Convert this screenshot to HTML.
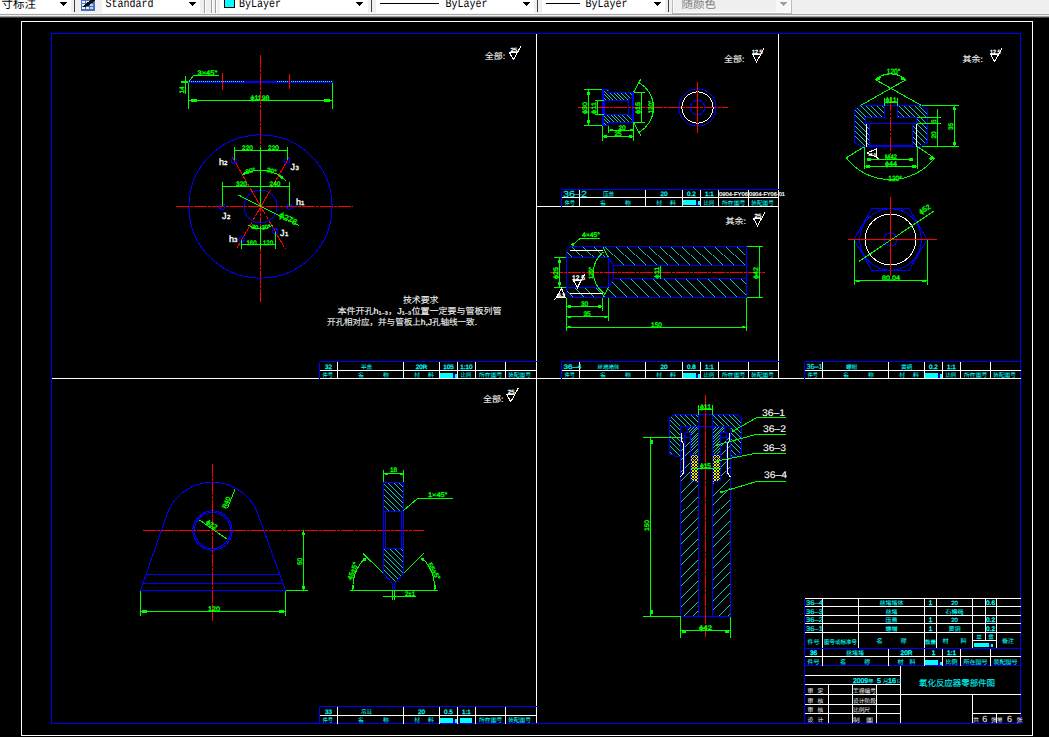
<!DOCTYPE html>
<html><head><meta charset="utf-8"><title>CAD</title>
<style>html,body{margin:0;padding:0;background:#000;overflow:hidden}svg{display:block}</style>
</head><body>
<svg width="1049" height="737" viewBox="0 0 1049 737" shape-rendering="crispEdges" text-rendering="geometricPrecision">
<rect x="0" y="0" width="1049" height="737" fill="#000" stroke="none" stroke-width="1"/>
<rect x="21.5" y="21.5" width="1011" height="713.5" fill="none" stroke="#ffffff" stroke-width="1"/>
<rect x="51.5" y="33.5" width="969" height="689.5" fill="none" stroke="#0000ff" stroke-width="1"/>
<line x1="51.5" y1="378.5" x2="1020.5" y2="378.5" stroke="#ffffff" stroke-width="1"/>
<line x1="536.5" y1="33.5" x2="536.5" y2="723" stroke="#ffffff" stroke-width="1"/>
<line x1="778.5" y1="33.5" x2="778.5" y2="378.5" stroke="#ffffff" stroke-width="1"/>
<line x1="536.5" y1="206.5" x2="778.5" y2="206.5" stroke="#ffffff" stroke-width="1"/>
<rect x="0" y="0" width="1049" height="14" fill="#f0f0f0" stroke="none" stroke-width="1"/>
<rect x="0" y="13" width="1049" height="1" fill="#f6f6f6" stroke="none" stroke-width="1"/>
<rect x="0" y="14" width="1049" height="1" fill="#a8a8a8" stroke="none" stroke-width="1"/>
<rect x="0" y="15" width="1049" height="1" fill="#f0f0f0" stroke="none" stroke-width="1"/>
<rect x="0" y="16" width="1049" height="1" fill="#a0a0a0" stroke="none" stroke-width="1"/>
<rect x="0" y="17" width="1049" height="1" fill="#404040" stroke="none" stroke-width="1"/>
<rect x="0" y="0" width="71" height="13" fill="#fff" stroke="none" stroke-width="1"/>
<rect x="60" y="2" width="7" height="1" fill="#000" stroke="none" stroke-width="1"/>
<rect x="61" y="3" width="5" height="1" fill="#000" stroke="none" stroke-width="1"/>
<rect x="62" y="4" width="3" height="1" fill="#000" stroke="none" stroke-width="1"/>
<rect x="63" y="5" width="1" height="1" fill="#000" stroke="none" stroke-width="1"/>
<text x="1.5" y="7.5" fill="#000" font-size="11.5" text-anchor="start" font-family='"Liberation Sans","Noto Sans CJK SC",sans-serif' font-weight="400">寸标注</text>
<line x1="74.5" y1="0" x2="74.5" y2="12" stroke="#404040" stroke-width="1"/>
<rect x="81" y="0" width="14" height="11" fill="#4f78c4" stroke="none" stroke-width="1"/>
<rect x="81" y="6" width="14" height="5" fill="#4a6fb0" stroke="none" stroke-width="1"/>
<rect x="82" y="1" width="3" height="2" fill="#e8f0ff" stroke="none" stroke-width="1"/>
<rect x="82" y="4" width="3" height="2" fill="#e8f0ff" stroke="none" stroke-width="1"/>
<rect x="82" y="7" width="3" height="2" fill="#e8f0ff" stroke="none" stroke-width="1"/>
<rect x="86" y="1" width="3" height="2" fill="#e8f0ff" stroke="none" stroke-width="1"/>
<rect x="86" y="4" width="3" height="2" fill="#e8f0ff" stroke="none" stroke-width="1"/>
<rect x="86" y="7" width="3" height="2" fill="#e8f0ff" stroke="none" stroke-width="1"/>
<rect x="90" y="1" width="3" height="2" fill="#b8d0ff" stroke="none" stroke-width="1"/>
<rect x="90" y="4" width="3" height="2" fill="#b8d0ff" stroke="none" stroke-width="1"/>
<rect x="90" y="7" width="3" height="2" fill="#b8d0ff" stroke="none" stroke-width="1"/>
<polygon points="83.5,6.5 86,4 93.5,-1 95,0 88,5.5" fill="#111" stroke="#111" stroke-width="1"/>
<rect x="101.5" y="0" width="98.5" height="13" fill="#fff" stroke="none" stroke-width="1"/>
<rect x="189" y="2" width="7" height="1" fill="#000" stroke="none" stroke-width="1"/>
<rect x="190" y="3" width="5" height="1" fill="#000" stroke="none" stroke-width="1"/>
<rect x="191" y="4" width="3" height="1" fill="#000" stroke="none" stroke-width="1"/>
<rect x="192" y="5" width="1" height="1" fill="#000" stroke="none" stroke-width="1"/>
<text x="105.5" y="5.6" fill="#000" font-size="10" font-family='"Liberation Mono","Noto Serif CJK SC",monospace' textLength="48" lengthAdjust="spacingAndGlyphs" transform="scale(1,1.2)">Standard</text>
<line x1="204.5" y1="0" x2="204.5" y2="13" stroke="#a0a0a0" stroke-width="1"/>
<line x1="205.5" y1="0" x2="205.5" y2="13" stroke="#fff" stroke-width="1"/>
<line x1="211.5" y1="0" x2="211.5" y2="13" stroke="#a0a0a0" stroke-width="1"/>
<line x1="212.5" y1="0" x2="212.5" y2="13" stroke="#fff" stroke-width="1"/>
<line x1="215.5" y1="0" x2="215.5" y2="13" stroke="#a0a0a0" stroke-width="1"/>
<line x1="216.5" y1="0" x2="216.5" y2="13" stroke="#fff" stroke-width="1"/>
<rect x="220" y="0" width="147.5" height="13" fill="#fff" stroke="none" stroke-width="1"/>
<rect x="356" y="2" width="7" height="1" fill="#000" stroke="none" stroke-width="1"/>
<rect x="357" y="3" width="5" height="1" fill="#000" stroke="none" stroke-width="1"/>
<rect x="358" y="4" width="3" height="1" fill="#000" stroke="none" stroke-width="1"/>
<rect x="359" y="5" width="1" height="1" fill="#000" stroke="none" stroke-width="1"/>
<text x="239" y="5.6" fill="#000" font-size="10" font-family='"Liberation Mono","Noto Serif CJK SC",monospace' textLength="42" lengthAdjust="spacingAndGlyphs" transform="scale(1,1.2)">ByLayer</text>
<rect x="224.5" y="-1" width="10" height="8" fill="#00ffff" stroke="#000" stroke-width="1"/>
<line x1="371.5" y1="0" x2="371.5" y2="12" stroke="#404040" stroke-width="1"/>
<rect x="376" y="0" width="158" height="13" fill="#fff" stroke="none" stroke-width="1"/>
<rect x="523" y="2" width="7" height="1" fill="#000" stroke="none" stroke-width="1"/>
<rect x="524" y="3" width="5" height="1" fill="#000" stroke="none" stroke-width="1"/>
<rect x="525" y="4" width="3" height="1" fill="#000" stroke="none" stroke-width="1"/>
<rect x="526" y="5" width="1" height="1" fill="#000" stroke="none" stroke-width="1"/>
<line x1="380" y1="3.5" x2="439" y2="3.5" stroke="#000" stroke-width="1"/>
<text x="445.5" y="5.6" fill="#000" font-size="10" font-family='"Liberation Mono","Noto Serif CJK SC",monospace' textLength="42" lengthAdjust="spacingAndGlyphs" transform="scale(1,1.2)">ByLayer</text>
<line x1="537.5" y1="0" x2="537.5" y2="12" stroke="#404040" stroke-width="1"/>
<rect x="542" y="0" width="123" height="13" fill="#fff" stroke="none" stroke-width="1"/>
<rect x="654" y="2" width="7" height="1" fill="#000" stroke="none" stroke-width="1"/>
<rect x="655" y="3" width="5" height="1" fill="#000" stroke="none" stroke-width="1"/>
<rect x="656" y="4" width="3" height="1" fill="#000" stroke="none" stroke-width="1"/>
<rect x="657" y="5" width="1" height="1" fill="#000" stroke="none" stroke-width="1"/>
<line x1="546" y1="3.5" x2="580" y2="3.5" stroke="#000" stroke-width="1"/>
<text x="585.5" y="5.6" fill="#000" font-size="10" font-family='"Liberation Mono","Noto Serif CJK SC",monospace' textLength="42" lengthAdjust="spacingAndGlyphs" transform="scale(1,1.2)">ByLayer</text>
<line x1="668.5" y1="0" x2="668.5" y2="12" stroke="#404040" stroke-width="1"/>
<rect x="672" y="0" width="120" height="14" fill="#b8b8b8" stroke="none" stroke-width="1"/>
<rect x="673" y="0" width="118" height="13" fill="#fff" stroke="none" stroke-width="1"/>
<rect x="674" y="0" width="116" height="12" fill="#f0f0f0" stroke="none" stroke-width="1"/>
<rect x="776" y="0" width="14" height="12" fill="#f8f8f8" stroke="none" stroke-width="1"/>
<rect x="780" y="2" width="7" height="1" fill="#a0a0a0" stroke="none" stroke-width="1"/>
<rect x="781" y="3" width="5" height="1" fill="#a0a0a0" stroke="none" stroke-width="1"/>
<rect x="782" y="4" width="3" height="1" fill="#a0a0a0" stroke="none" stroke-width="1"/>
<rect x="783" y="5" width="1" height="1" fill="#a0a0a0" stroke="none" stroke-width="1"/>
<text x="681.5" y="7.5" fill="#808080" font-size="11.5" text-anchor="start" font-family='"Liberation Sans","Noto Sans CJK SC",sans-serif' font-weight="400">随颜色</text>
<line x1="319.5" y1="361.5" x2="536.5" y2="361.5" stroke="#0000ff" stroke-width="1"/>
<line x1="319.5" y1="361.5" x2="319.5" y2="378.5" stroke="#0000ff" stroke-width="1"/>
<line x1="319.5" y1="370.5" x2="536.5" y2="370.5" stroke="#ffffff" stroke-width="1"/>
<line x1="337.5" y1="361.5" x2="337.5" y2="378.5" stroke="#ffffff" stroke-width="1"/>
<line x1="403.5" y1="361.5" x2="403.5" y2="378.5" stroke="#ffffff" stroke-width="1"/>
<line x1="439.5" y1="361.5" x2="439.5" y2="378.5" stroke="#ffffff" stroke-width="1"/>
<line x1="457.5" y1="361.5" x2="457.5" y2="378.5" stroke="#ffffff" stroke-width="1"/>
<line x1="475.5" y1="361.5" x2="475.5" y2="378.5" stroke="#ffffff" stroke-width="1"/>
<line x1="505.5" y1="361.5" x2="505.5" y2="378.5" stroke="#ffffff" stroke-width="1"/>
<text x="328.5" y="368.5" fill="#00ffff" font-size="6.3" text-anchor="middle" font-family='"Liberation Sans","Noto Sans CJK SC",sans-serif' stroke="#00ffff" stroke-width="0.3">32</text>
<text x="366.5" y="368.5" fill="#00ffff" font-size="5.6" text-anchor="middle" font-family='"Liberation Sans","Noto Sans CJK SC",sans-serif' font-weight="300" stroke="#00ffff" stroke-width="0.12">平盖</text>
<text x="421.5" y="368.5" fill="#00ffff" font-size="6.3" text-anchor="middle" font-family='"Liberation Sans","Noto Sans CJK SC",sans-serif' stroke="#00ffff" stroke-width="0.3">20R</text>
<text x="448.5" y="368.5" fill="#00ffff" font-size="6.3" text-anchor="middle" font-family='"Liberation Sans","Noto Sans CJK SC",sans-serif' stroke="#00ffff" stroke-width="0.3">105</text>
<text x="466.5" y="368.5" fill="#00ffff" font-size="6.3" text-anchor="middle" font-family='"Liberation Sans","Noto Sans CJK SC",sans-serif' stroke="#00ffff" stroke-width="0.3">1:10</text>
<text x="322.5" y="377" fill="#00ffff" font-size="5.8" text-anchor="start" font-family='"Liberation Sans","Noto Sans CJK SC",sans-serif' font-weight="300" textLength="10.5" lengthAdjust="spacingAndGlyphs" stroke="#00ffff" stroke-width="0.12">件号</text>
<text x="358" y="377" fill="#00ffff" font-size="5.8" text-anchor="start" font-family='"Liberation Sans","Noto Sans CJK SC",sans-serif' font-weight="300" textLength="6" lengthAdjust="spacingAndGlyphs" stroke="#00ffff" stroke-width="0.12">名</text>
<text x="383" y="377" fill="#00ffff" font-size="5.8" text-anchor="start" font-family='"Liberation Sans","Noto Sans CJK SC",sans-serif' font-weight="300" textLength="6" lengthAdjust="spacingAndGlyphs" stroke="#00ffff" stroke-width="0.12">称</text>
<text x="414" y="377" fill="#00ffff" font-size="5.8" text-anchor="start" font-family='"Liberation Sans","Noto Sans CJK SC",sans-serif' font-weight="300" textLength="6" lengthAdjust="spacingAndGlyphs" stroke="#00ffff" stroke-width="0.12">材</text>
<text x="428" y="377" fill="#00ffff" font-size="5.8" text-anchor="start" font-family='"Liberation Sans","Noto Sans CJK SC",sans-serif' font-weight="300" textLength="6" lengthAdjust="spacingAndGlyphs" stroke="#00ffff" stroke-width="0.12">料</text>
<rect x="440" y="373" width="13" height="4.5" fill="#00ffff" stroke="none" stroke-width="1"/>
<rect x="453" y="375" width="3" height="2.5" fill="#0000ff" stroke="none" stroke-width="1"/>
<rect x="455" y="374" width="2" height="3.5" fill="#00ffff" stroke="none" stroke-width="1"/>
<text x="460.5" y="377" fill="#00ffff" font-size="5.8" text-anchor="start" font-family='"Liberation Sans","Noto Sans CJK SC",sans-serif' font-weight="300" textLength="10.5" lengthAdjust="spacingAndGlyphs" stroke="#00ffff" stroke-width="0.12">比例</text>
<text x="479" y="377" fill="#00ffff" font-size="5.8" text-anchor="start" font-family='"Liberation Sans","Noto Sans CJK SC",sans-serif' font-weight="300" textLength="23.5" lengthAdjust="spacingAndGlyphs" stroke="#00ffff" stroke-width="0.12">所在图号</text>
<text x="508" y="377" fill="#00ffff" font-size="5.8" text-anchor="start" font-family='"Liberation Sans","Noto Sans CJK SC",sans-serif' font-weight="300" textLength="23" lengthAdjust="spacingAndGlyphs" stroke="#00ffff" stroke-width="0.12">装配图号</text>
<rect x="188" y="81" width="145" height="2" fill="#0000ff" stroke="none" stroke-width="1"/>
<line x1="189" y1="81.5" x2="245" y2="81.5" stroke="#00ffff" stroke-width="1" stroke-dasharray="1 1"/>
<line x1="277" y1="81.5" x2="332" y2="81.5" stroke="#00ffff" stroke-width="1" stroke-dasharray="1 1"/>
<line x1="185.5" y1="76" x2="185.5" y2="94" stroke="#00ff00" stroke-width="1"/>
<line x1="181" y1="82" x2="188" y2="82" stroke="#00ff00" stroke-width="2"/>
<line x1="188.5" y1="83" x2="188.5" y2="109" stroke="#00ff00" stroke-width="1"/>
<line x1="332.5" y1="83" x2="332.5" y2="109" stroke="#00ff00" stroke-width="1"/>
<line x1="188.5" y1="100.5" x2="332.5" y2="100.5" stroke="#00ff00" stroke-width="1"/>
<rect x="191" y="99" width="6" height="3" fill="#00ff00" stroke="none" stroke-width="1"/>
<rect x="324" y="99" width="6" height="3" fill="#00ff00" stroke="none" stroke-width="1"/>
<polyline points="189.5,81 193.5,75.5 219,75.5" fill="none" stroke="#00ff00" stroke-width="1"/>
<text x="197.5" y="75" fill="#00ff00" font-size="6.5" text-anchor="start" font-family='"Liberation Sans","Noto Sans CJK SC",sans-serif' textLength="20" lengthAdjust="spacingAndGlyphs" stroke="#00ff00" stroke-width="0.35">3×45°</text>
<text x="184" y="93.5" fill="#00ff00" font-size="6.5" text-anchor="start" font-family='"Liberation Sans","Noto Sans CJK SC",sans-serif' transform="rotate(-90 184 93.5)" stroke="#00ff00" stroke-width="0.35">14</text>
<text x="250.5" y="99.5" fill="#00ff00" font-size="6.5" text-anchor="start" font-family='"Liberation Sans","Noto Sans CJK SC",sans-serif' textLength="19" lengthAdjust="spacingAndGlyphs" stroke="#00ff00" stroke-width="0.35">ϕ1198</text>
<line x1="222.5" y1="73" x2="222.5" y2="90" stroke="#ff0000" stroke-width="1"/>
<line x1="289.5" y1="74" x2="289.5" y2="89" stroke="#ff0000" stroke-width="1"/>
<line x1="260.5" y1="55" x2="260.5" y2="303" stroke="#ff0000" stroke-width="1" stroke-dasharray="13 1 3 1"/>
<circle cx="260.5" cy="206.5" r="71.6" fill="none" stroke="#0000ff" stroke-width="1"/>
<circle cx="260.5" cy="206.5" r="16.5" fill="none" stroke="#0000ff" stroke-width="1"/>
<line x1="175.5" y1="206.5" x2="353" y2="206.5" stroke="#ff0000" stroke-width="1" stroke-dasharray="13 1 3 1"/>
<line x1="231.9" y1="156.5" x2="285.5" y2="249.4" stroke="#ff0000" stroke-width="1" stroke-dasharray="30 2 3 2"/>
<line x1="289" y1="157.6" x2="235.6" y2="250.5" stroke="#ff0000" stroke-width="1" stroke-dasharray="30 2 3 2"/>
<circle cx="234" cy="160.8" r="2.7" fill="none" stroke="#0000ff" stroke-width="1"/>
<circle cx="287.2" cy="160.8" r="2.7" fill="none" stroke="#0000ff" stroke-width="1"/>
<circle cx="222.1" cy="206.8" r="2.7" fill="none" stroke="#0000ff" stroke-width="1"/>
<circle cx="289.6" cy="206.8" r="2.7" fill="none" stroke="#0000ff" stroke-width="1"/>
<circle cx="241.6" cy="239.6" r="2.7" fill="none" stroke="#0000ff" stroke-width="1"/>
<circle cx="275.1" cy="231.4" r="2.7" fill="none" stroke="#0000ff" stroke-width="1"/>
<line x1="260.5" y1="146.5" x2="260.5" y2="206" stroke="#00ff00" stroke-width="1"/>
<line x1="260.5" y1="226" x2="260.5" y2="249" stroke="#00ff00" stroke-width="1"/>
<line x1="234.5" y1="150.5" x2="287.5" y2="150.5" stroke="#00ff00" stroke-width="1"/>
<line x1="234.5" y1="146.5" x2="234.5" y2="160" stroke="#00ff00" stroke-width="1"/>
<line x1="287.5" y1="146.5" x2="287.5" y2="160" stroke="#00ff00" stroke-width="1"/>
<text x="247.5" y="150" fill="#00ff00" font-size="6.5" text-anchor="middle" font-family='"Liberation Sans","Noto Sans CJK SC",sans-serif' stroke="#00ff00" stroke-width="0.35">220</text>
<text x="273.5" y="150" fill="#00ff00" font-size="6.5" text-anchor="middle" font-family='"Liberation Sans","Noto Sans CJK SC",sans-serif' stroke="#00ff00" stroke-width="0.35">220</text>
<line x1="222.5" y1="186.5" x2="289.5" y2="186.5" stroke="#00ff00" stroke-width="1"/>
<line x1="222.5" y1="182" x2="222.5" y2="206" stroke="#00ff00" stroke-width="1"/>
<line x1="289.5" y1="182" x2="289.5" y2="206" stroke="#00ff00" stroke-width="1"/>
<text x="241.5" y="186" fill="#00ff00" font-size="6.5" text-anchor="middle" font-family='"Liberation Sans","Noto Sans CJK SC",sans-serif' stroke="#00ff00" stroke-width="0.35">320</text>
<text x="275" y="186" fill="#00ff00" font-size="6.5" text-anchor="middle" font-family='"Liberation Sans","Noto Sans CJK SC",sans-serif' stroke="#00ff00" stroke-width="0.35">240</text>
<line x1="241.5" y1="244.5" x2="275.5" y2="244.5" stroke="#00ff00" stroke-width="1"/>
<line x1="241.5" y1="240" x2="241.5" y2="249" stroke="#00ff00" stroke-width="1"/>
<line x1="275.5" y1="232" x2="275.5" y2="249" stroke="#00ff00" stroke-width="1"/>
<text x="251.5" y="244.5" fill="#00ff00" font-size="6.5" text-anchor="middle" font-family='"Liberation Sans","Noto Sans CJK SC",sans-serif' textLength="10" lengthAdjust="spacingAndGlyphs" stroke="#00ff00" stroke-width="0.35">160</text>
<text x="268" y="244.5" fill="#00ff00" font-size="6.5" text-anchor="middle" font-family='"Liberation Sans","Noto Sans CJK SC",sans-serif' textLength="10" lengthAdjust="spacingAndGlyphs" stroke="#00ff00" stroke-width="0.35">120</text>
<path d="M242.35 175.06 A36.3 36.3 0 0 1 285.72 180.39" fill="none" stroke="#00ff00" stroke-width="1"/>
<polygon points="242.4,175.2 246.5,171.3 247.5,172.8" fill="#00ff00" stroke="#00ff00" stroke-width="1"/>
<polygon points="278.7,175.1 283,177 282,178.5" fill="#00ff00" stroke="#00ff00" stroke-width="1"/>
<text x="251" y="173" fill="#00ff00" font-size="6.5" text-anchor="middle" font-family='"Liberation Sans","Noto Sans CJK SC",sans-serif' transform="rotate(-15 251 173)" stroke="#00ff00" stroke-width="0.35">30°</text>
<text x="271" y="173" fill="#00ff00" font-size="6.5" text-anchor="middle" font-family='"Liberation Sans","Noto Sans CJK SC",sans-serif' transform="rotate(15 271 173)" stroke="#00ff00" stroke-width="0.35">30°</text>
<path d="M247.65 224.85 A22.4 22.4 0 0 0 273.35 224.85" fill="none" stroke="#00ff00" stroke-width="1"/>
<text x="254.5" y="229" fill="#00ff00" font-size="6" text-anchor="middle" font-family='"Liberation Sans","Noto Sans CJK SC",sans-serif' transform="rotate(10 254.5 229)" stroke="#00ff00" stroke-width="0.35">30</text>
<text x="266.5" y="229" fill="#00ff00" font-size="6" text-anchor="middle" font-family='"Liberation Sans","Noto Sans CJK SC",sans-serif' transform="rotate(-10 266.5 229)" stroke="#00ff00" stroke-width="0.35">30°</text>
<line x1="238.4" y1="195" x2="299.2" y2="225.5" stroke="#00ff00" stroke-width="1"/>
<text x="278.5" y="216.8" fill="#00ff00" font-size="8" text-anchor="start" font-family='"Liberation Sans","Noto Sans CJK SC",sans-serif' transform="rotate(27 278.5 216.8)" textLength="19" lengthAdjust="spacingAndGlyphs" stroke="#00ff00" stroke-width="0.35">ϕ276</text>
<text x="219" y="165" fill="#ffffff" font-size="9" text-anchor="start" font-family='"Liberation Sans","Noto Sans CJK SC",sans-serif' stroke="#ffffff" stroke-width="0.35">h</text>
<text x="224" y="165" fill="#ffffff" font-size="6" text-anchor="start" font-family='"Liberation Sans","Noto Sans CJK SC",sans-serif' stroke="#ffffff" stroke-width="0.35">2</text>
<text x="290.5" y="169.5" fill="#ffffff" font-size="9" text-anchor="start" font-family='"Liberation Sans","Noto Sans CJK SC",sans-serif' stroke="#ffffff" stroke-width="0.35">J</text>
<text x="295.5" y="169.5" fill="#ffffff" font-size="6" text-anchor="start" font-family='"Liberation Sans","Noto Sans CJK SC",sans-serif' stroke="#ffffff" stroke-width="0.35">3</text>
<text x="296" y="205" fill="#ffffff" font-size="9" text-anchor="start" font-family='"Liberation Sans","Noto Sans CJK SC",sans-serif' stroke="#ffffff" stroke-width="0.35">h</text>
<text x="301" y="205" fill="#ffffff" font-size="6" text-anchor="start" font-family='"Liberation Sans","Noto Sans CJK SC",sans-serif' stroke="#ffffff" stroke-width="0.35">1</text>
<text x="222" y="218.5" fill="#ffffff" font-size="9" text-anchor="start" font-family='"Liberation Sans","Noto Sans CJK SC",sans-serif' stroke="#ffffff" stroke-width="0.35">J</text>
<text x="227" y="218.5" fill="#ffffff" font-size="6" text-anchor="start" font-family='"Liberation Sans","Noto Sans CJK SC",sans-serif' stroke="#ffffff" stroke-width="0.35">2</text>
<text x="280" y="236" fill="#ffffff" font-size="9" text-anchor="start" font-family='"Liberation Sans","Noto Sans CJK SC",sans-serif' stroke="#ffffff" stroke-width="0.35">J</text>
<text x="285" y="236" fill="#ffffff" font-size="6" text-anchor="start" font-family='"Liberation Sans","Noto Sans CJK SC",sans-serif' stroke="#ffffff" stroke-width="0.35">1</text>
<text x="229" y="242" fill="#ffffff" font-size="9" text-anchor="start" font-family='"Liberation Sans","Noto Sans CJK SC",sans-serif' stroke="#ffffff" stroke-width="0.35">h</text>
<text x="234" y="242" fill="#ffffff" font-size="6" text-anchor="start" font-family='"Liberation Sans","Noto Sans CJK SC",sans-serif' stroke="#ffffff" stroke-width="0.35">3</text>
<text x="403" y="303" fill="#ffffff" font-size="8.8" text-anchor="start" font-family='"Liberation Sans","Noto Sans CJK SC",sans-serif' font-weight="300" textLength="35.5" lengthAdjust="spacingAndGlyphs" stroke="#ffffff" stroke-width="0.2">技术要求</text>
<text x="337.5" y="314" fill="#ffffff" font-size="8.6" text-anchor="start" font-family='"Liberation Sans","Noto Sans CJK SC",sans-serif' font-weight="300" textLength="164" lengthAdjust="spacingAndGlyphs" stroke="#ffffff" stroke-width="0.2">本件开孔h₁₋₃，J₁₋₃位置一定要与管板列管</text>
<text x="327" y="325" fill="#ffffff" font-size="8.6" text-anchor="start" font-family='"Liberation Sans","Noto Sans CJK SC",sans-serif' font-weight="300" textLength="150" lengthAdjust="spacingAndGlyphs" stroke="#ffffff" stroke-width="0.2">开孔相对应，并与管板上h,J孔轴线一致.</text>
<polygon points="509.3,52.2 517.6,52.2 513.3,59.7" fill="none" stroke="#ffffff" stroke-width="1"/>
<line x1="517.6" y1="52.2" x2="520.8" y2="46.2" stroke="#ffffff" stroke-width="1"/>
<text x="513.8" y="51.7" fill="#ffffff" font-size="6" text-anchor="middle" font-family='"Liberation Sans","Noto Sans CJK SC",sans-serif' stroke="#ffffff" stroke-width="0.35">25</text>
<text x="484.7" y="58.7" fill="#ffffff" font-size="8.5" text-anchor="start" font-family='"Liberation Sans","Noto Sans CJK SC",sans-serif' font-weight="300" textLength="20.5" lengthAdjust="spacingAndGlyphs" stroke="#ffffff" stroke-width="0.2">全部:</text>
<line x1="561.5" y1="189.5" x2="778.5" y2="189.5" stroke="#0000ff" stroke-width="1"/>
<line x1="561.5" y1="189.5" x2="561.5" y2="206.5" stroke="#0000ff" stroke-width="1"/>
<line x1="561.5" y1="197.5" x2="778.5" y2="197.5" stroke="#ffffff" stroke-width="1"/>
<line x1="579.5" y1="189.5" x2="579.5" y2="206.5" stroke="#ffffff" stroke-width="1"/>
<line x1="645.5" y1="189.5" x2="645.5" y2="206.5" stroke="#ffffff" stroke-width="1"/>
<line x1="682.5" y1="189.5" x2="682.5" y2="206.5" stroke="#ffffff" stroke-width="1"/>
<line x1="700.5" y1="189.5" x2="700.5" y2="206.5" stroke="#ffffff" stroke-width="1"/>
<line x1="718.5" y1="189.5" x2="718.5" y2="206.5" stroke="#ffffff" stroke-width="1"/>
<line x1="748.5" y1="189.5" x2="748.5" y2="206.5" stroke="#ffffff" stroke-width="1"/>
<text x="608.5" y="195.5" fill="#00ffff" font-size="5.6" text-anchor="middle" font-family='"Liberation Sans","Noto Sans CJK SC",sans-serif' font-weight="300" stroke="#00ffff" stroke-width="0.12">压盖</text>
<text x="664" y="195.5" fill="#00ffff" font-size="6.3" text-anchor="middle" font-family='"Liberation Sans","Noto Sans CJK SC",sans-serif' stroke="#00ffff" stroke-width="0.3">20</text>
<text x="691.5" y="195.5" fill="#00ffff" font-size="6.3" text-anchor="middle" font-family='"Liberation Sans","Noto Sans CJK SC",sans-serif' stroke="#00ffff" stroke-width="0.3">0.2</text>
<text x="709.5" y="195.5" fill="#00ffff" font-size="6.3" text-anchor="middle" font-family='"Liberation Sans","Noto Sans CJK SC",sans-serif' stroke="#00ffff" stroke-width="0.3">1:1</text>
<text x="564.5" y="205" fill="#00ffff" font-size="5.8" text-anchor="start" font-family='"Liberation Sans","Noto Sans CJK SC",sans-serif' font-weight="300" textLength="10.5" lengthAdjust="spacingAndGlyphs" stroke="#00ffff" stroke-width="0.12">件号</text>
<text x="600" y="205" fill="#00ffff" font-size="5.8" text-anchor="start" font-family='"Liberation Sans","Noto Sans CJK SC",sans-serif' font-weight="300" textLength="6" lengthAdjust="spacingAndGlyphs" stroke="#00ffff" stroke-width="0.12">名</text>
<text x="625" y="205" fill="#00ffff" font-size="5.8" text-anchor="start" font-family='"Liberation Sans","Noto Sans CJK SC",sans-serif' font-weight="300" textLength="6" lengthAdjust="spacingAndGlyphs" stroke="#00ffff" stroke-width="0.12">称</text>
<text x="656" y="205" fill="#00ffff" font-size="5.8" text-anchor="start" font-family='"Liberation Sans","Noto Sans CJK SC",sans-serif' font-weight="300" textLength="6" lengthAdjust="spacingAndGlyphs" stroke="#00ffff" stroke-width="0.12">材</text>
<text x="670" y="205" fill="#00ffff" font-size="5.8" text-anchor="start" font-family='"Liberation Sans","Noto Sans CJK SC",sans-serif' font-weight="300" textLength="6" lengthAdjust="spacingAndGlyphs" stroke="#00ffff" stroke-width="0.12">料</text>
<rect x="683" y="200" width="13" height="4.5" fill="#00ffff" stroke="none" stroke-width="1"/>
<rect x="696" y="202" width="3" height="2.5" fill="#0000ff" stroke="none" stroke-width="1"/>
<rect x="698" y="201" width="2" height="3.5" fill="#00ffff" stroke="none" stroke-width="1"/>
<text x="703.5" y="205" fill="#00ffff" font-size="5.8" text-anchor="start" font-family='"Liberation Sans","Noto Sans CJK SC",sans-serif' font-weight="300" textLength="10.5" lengthAdjust="spacingAndGlyphs" stroke="#00ffff" stroke-width="0.12">比例</text>
<text x="722" y="205" fill="#00ffff" font-size="5.8" text-anchor="start" font-family='"Liberation Sans","Noto Sans CJK SC",sans-serif' font-weight="300" textLength="23.5" lengthAdjust="spacingAndGlyphs" stroke="#00ffff" stroke-width="0.12">所在图号</text>
<text x="751" y="205" fill="#00ffff" font-size="5.8" text-anchor="start" font-family='"Liberation Sans","Noto Sans CJK SC",sans-serif' font-weight="300" textLength="23" lengthAdjust="spacingAndGlyphs" stroke="#00ffff" stroke-width="0.12">装配图号</text>
<text x="563" y="196.7" fill="#00ffff" font-size="8.8" text-anchor="start" font-family='"Liberation Sans","Noto Sans CJK SC",sans-serif' textLength="24" lengthAdjust="spacingAndGlyphs" stroke="#00ffff" stroke-width="0.1">36–2</text>
<text x="719" y="196" fill="#ffffff" font-size="5.5" text-anchor="start" font-family='"Liberation Sans","Noto Sans CJK SC",sans-serif' textLength="29" lengthAdjust="spacingAndGlyphs" stroke="#ffffff" stroke-width="0.2">0904-FY06</text>
<text x="749" y="196" fill="#ffffff" font-size="5.5" text-anchor="start" font-family='"Liberation Sans","Noto Sans CJK SC",sans-serif' textLength="36" lengthAdjust="spacingAndGlyphs" stroke="#ffffff" stroke-width="0.2">0904-FY06-01</text>
<clipPath id="c1"><path d="M602.5 89.5 L608.5 89.5 L608.5 92.5 L633.5 92.5 L633.5 95.5 L628.5 100.5 L604.5 100.5 L602.5 100.5Z" clip-rule="evenodd"/></clipPath>
<path clip-path="url(#c1)" d="M587.6 89.5 L598.6 100.5 M591.5 89.5 L602.5 100.5 M595.4 89.5 L606.4 100.5 M599.3 89.5 L610.3 100.5 M603.2 89.5 L614.2 100.5 M607.1 89.5 L618.1 100.5 M611 89.5 L622 100.5 M614.9 89.5 L625.9 100.5 M618.8 89.5 L629.8 100.5 M622.7 89.5 L633.7 100.5 M626.6 89.5 L637.6 100.5 M630.5 89.5 L641.5 100.5 M634.4 89.5 L645.4 100.5 M638.3 89.5 L649.3 100.5 M642.2 89.5 L653.2 100.5 M646.1 89.5 L657.1 100.5" fill="none" stroke="#00ffff" stroke-width="0.8"/>
<clipPath id="c2"><path d="M602.5 114.5 L628.5 114.5 L633.5 119.5 L633.5 122.5 L608.5 122.5 L608.5 125.5 L602.5 125.5Z" clip-rule="evenodd"/></clipPath>
<path clip-path="url(#c2)" d="M587.6 114.5 L598.6 125.5 M591.5 114.5 L602.5 125.5 M595.4 114.5 L606.4 125.5 M599.3 114.5 L610.3 125.5 M603.2 114.5 L614.2 125.5 M607.1 114.5 L618.1 125.5 M611 114.5 L622 125.5 M614.9 114.5 L625.9 125.5 M618.8 114.5 L629.8 125.5 M622.7 114.5 L633.7 125.5 M626.6 114.5 L637.6 125.5 M630.5 114.5 L641.5 125.5 M634.4 114.5 L645.4 125.5 M638.3 114.5 L649.3 125.5 M642.2 114.5 L653.2 125.5 M646.1 114.5 L657.1 125.5" fill="none" stroke="#00ffff" stroke-width="0.8"/>
<polygon points="602.5,89.5 608.5,89.5 608.5,92.5 633.5,92.5 633.5,122.5 608.5,122.5 608.5,125.5 602.5,125.5" fill="none" stroke="#0000ff" stroke-width="1"/>
<polyline points="633.5,95.5 628.5,100.5 604.5,100.5 604.5,114.5 628.5,114.5 633.5,119.5" fill="none" stroke="#0000ff" stroke-width="1"/>
<line x1="628.5" y1="100.5" x2="628.5" y2="114.5" stroke="#0000ff" stroke-width="1"/>
<line x1="603.5" y1="89.5" x2="603.5" y2="125.5" stroke="#0000ff" stroke-width="1"/>
<line x1="632.5" y1="92.5" x2="632.5" y2="122.5" stroke="#0000ff" stroke-width="1"/>
<line x1="578" y1="107.5" x2="728" y2="107.5" stroke="#ff0000" stroke-width="1" stroke-dasharray="13 1 3 1"/>
<circle cx="697.5" cy="107.5" r="18.6" fill="none" stroke="#0000ff" stroke-width="1"/>
<circle cx="697.5" cy="107.5" r="15.6" fill="none" stroke="#ffffff" stroke-width="1"/>
<circle cx="697.5" cy="107.5" r="7.2" fill="none" stroke="#0000ff" stroke-width="1"/>
<line x1="697.5" y1="82" x2="697.5" y2="132.5" stroke="#ff0000" stroke-width="1"/>
<line x1="584" y1="89.5" x2="602" y2="89.5" stroke="#00ff00" stroke-width="1"/>
<line x1="584" y1="125.5" x2="602" y2="125.5" stroke="#00ff00" stroke-width="1"/>
<line x1="588.5" y1="89.5" x2="588.5" y2="125.5" stroke="#00ff00" stroke-width="1"/>
<polygon points="588.5,89.5 587.5,94.5 589.5,94.5" fill="#00ff00" stroke="#00ff00" stroke-width="1"/>
<polygon points="588.5,125.5 587.5,120.5 589.5,120.5" fill="#00ff00" stroke="#00ff00" stroke-width="1"/>
<text x="586.5" y="114" fill="#00ff00" font-size="6.5" text-anchor="start" font-family='"Liberation Sans","Noto Sans CJK SC",sans-serif' transform="rotate(-90 586.5 114)" textLength="12" lengthAdjust="spacingAndGlyphs" stroke="#00ff00" stroke-width="0.35">ϕ30</text>
<line x1="594.5" y1="100.5" x2="604" y2="100.5" stroke="#00ff00" stroke-width="1"/>
<line x1="594.5" y1="114.5" x2="604" y2="114.5" stroke="#00ff00" stroke-width="1"/>
<line x1="597.5" y1="100" x2="597.5" y2="114.5" stroke="#00ff00" stroke-width="1"/>
<text x="595.5" y="114" fill="#00ff00" font-size="6.5" text-anchor="start" font-family='"Liberation Sans","Noto Sans CJK SC",sans-serif' transform="rotate(-90 595.5 114)" textLength="12" lengthAdjust="spacingAndGlyphs" stroke="#00ff00" stroke-width="0.35">ϕ11</text>
<line x1="633.5" y1="92.5" x2="645" y2="92.5" stroke="#00ff00" stroke-width="1"/>
<line x1="633.5" y1="122.5" x2="645" y2="122.5" stroke="#00ff00" stroke-width="1"/>
<line x1="641.5" y1="92.5" x2="641.5" y2="122.5" stroke="#00ff00" stroke-width="1"/>
<text x="640" y="114" fill="#00ff00" font-size="6.5" text-anchor="start" font-family='"Liberation Sans","Noto Sans CJK SC",sans-serif' transform="rotate(-90 640 114)" textLength="12" lengthAdjust="spacingAndGlyphs" stroke="#00ff00" stroke-width="0.35">ϕ15</text>
<line x1="633.5" y1="92.5" x2="640.7" y2="79.4" stroke="#00ff00" stroke-width="1"/>
<line x1="633.5" y1="122.5" x2="640.7" y2="135.6" stroke="#00ff00" stroke-width="1"/>
<path d="M639.15 82.65 A28.7 28.7 0 0 1 639.15 132.35" fill="none" stroke="#00ff00" stroke-width="1"/>
<text x="652.5" y="113.5" fill="#00ff00" font-size="6.5" text-anchor="start" font-family='"Liberation Sans","Noto Sans CJK SC",sans-serif' transform="rotate(-90 652.5 113.5)" textLength="13" lengthAdjust="spacingAndGlyphs" stroke="#00ff00" stroke-width="0.35">120°</text>
<line x1="602.5" y1="125.5" x2="602.5" y2="141" stroke="#00ff00" stroke-width="1"/>
<line x1="633.5" y1="122.5" x2="633.5" y2="141" stroke="#00ff00" stroke-width="1"/>
<line x1="608.5" y1="125.5" x2="608.5" y2="133" stroke="#00ff00" stroke-width="1"/>
<line x1="608.5" y1="130.5" x2="633.5" y2="130.5" stroke="#00ff00" stroke-width="1"/>
<line x1="602.5" y1="136.5" x2="633.5" y2="136.5" stroke="#00ff00" stroke-width="1"/>
<rect x="609.5" y="129" width="3" height="2" fill="#00ff00" stroke="none" stroke-width="1"/>
<rect x="629.5" y="129" width="3" height="2" fill="#00ff00" stroke="none" stroke-width="1"/>
<rect x="604" y="135" width="3" height="3" fill="#00ff00" stroke="none" stroke-width="1"/>
<rect x="629" y="135" width="3" height="3" fill="#00ff00" stroke="none" stroke-width="1"/>
<text x="622" y="129.5" fill="#00ff00" font-size="6.5" text-anchor="middle" font-family='"Liberation Sans","Noto Sans CJK SC",sans-serif' stroke="#00ff00" stroke-width="0.35">20</text>
<text x="618" y="136" fill="#00ff00" font-size="6.5" text-anchor="middle" font-family='"Liberation Sans","Noto Sans CJK SC",sans-serif' stroke="#00ff00" stroke-width="0.35">25</text>
<polygon points="752.5,54.3 760.8,54.3 756.5,61.8" fill="none" stroke="#ffffff" stroke-width="1"/>
<line x1="760.8" y1="54.3" x2="764" y2="48.3" stroke="#ffffff" stroke-width="1"/>
<text x="757.3" y="53.8" fill="#ffffff" font-size="6" text-anchor="middle" font-family='"Liberation Sans","Noto Sans CJK SC",sans-serif' textLength="10.5" lengthAdjust="spacingAndGlyphs" stroke="#ffffff" stroke-width="0.35">12.5</text>
<text x="724" y="62.3" fill="#ffffff" font-size="8.5" text-anchor="start" font-family='"Liberation Sans","Noto Sans CJK SC",sans-serif' font-weight="300" textLength="20.5" lengthAdjust="spacingAndGlyphs" stroke="#ffffff" stroke-width="0.2">全部:</text>
<line x1="561.5" y1="361.5" x2="778.5" y2="361.5" stroke="#0000ff" stroke-width="1"/>
<line x1="561.5" y1="361.5" x2="561.5" y2="378.5" stroke="#0000ff" stroke-width="1"/>
<line x1="561.5" y1="370.5" x2="778.5" y2="370.5" stroke="#ffffff" stroke-width="1"/>
<line x1="579.5" y1="361.5" x2="579.5" y2="378.5" stroke="#ffffff" stroke-width="1"/>
<line x1="645.5" y1="361.5" x2="645.5" y2="378.5" stroke="#ffffff" stroke-width="1"/>
<line x1="682.5" y1="361.5" x2="682.5" y2="378.5" stroke="#ffffff" stroke-width="1"/>
<line x1="700.5" y1="361.5" x2="700.5" y2="378.5" stroke="#ffffff" stroke-width="1"/>
<line x1="718.5" y1="361.5" x2="718.5" y2="378.5" stroke="#ffffff" stroke-width="1"/>
<line x1="748.5" y1="361.5" x2="748.5" y2="378.5" stroke="#ffffff" stroke-width="1"/>
<text x="608.5" y="368.5" fill="#00ffff" font-size="5.6" text-anchor="middle" font-family='"Liberation Sans","Noto Sans CJK SC",sans-serif' font-weight="300" stroke="#00ffff" stroke-width="0.12">丝堵堵体</text>
<text x="664" y="368.5" fill="#00ffff" font-size="6.3" text-anchor="middle" font-family='"Liberation Sans","Noto Sans CJK SC",sans-serif' stroke="#00ffff" stroke-width="0.3">20</text>
<text x="691.5" y="368.5" fill="#00ffff" font-size="6.3" text-anchor="middle" font-family='"Liberation Sans","Noto Sans CJK SC",sans-serif' stroke="#00ffff" stroke-width="0.3">0.8</text>
<text x="709.5" y="368.5" fill="#00ffff" font-size="6.3" text-anchor="middle" font-family='"Liberation Sans","Noto Sans CJK SC",sans-serif' stroke="#00ffff" stroke-width="0.3">1:1</text>
<text x="564.5" y="377" fill="#00ffff" font-size="5.8" text-anchor="start" font-family='"Liberation Sans","Noto Sans CJK SC",sans-serif' font-weight="300" textLength="10.5" lengthAdjust="spacingAndGlyphs" stroke="#00ffff" stroke-width="0.12">件号</text>
<text x="600" y="377" fill="#00ffff" font-size="5.8" text-anchor="start" font-family='"Liberation Sans","Noto Sans CJK SC",sans-serif' font-weight="300" textLength="6" lengthAdjust="spacingAndGlyphs" stroke="#00ffff" stroke-width="0.12">名</text>
<text x="625" y="377" fill="#00ffff" font-size="5.8" text-anchor="start" font-family='"Liberation Sans","Noto Sans CJK SC",sans-serif' font-weight="300" textLength="6" lengthAdjust="spacingAndGlyphs" stroke="#00ffff" stroke-width="0.12">称</text>
<text x="656" y="377" fill="#00ffff" font-size="5.8" text-anchor="start" font-family='"Liberation Sans","Noto Sans CJK SC",sans-serif' font-weight="300" textLength="6" lengthAdjust="spacingAndGlyphs" stroke="#00ffff" stroke-width="0.12">材</text>
<text x="670" y="377" fill="#00ffff" font-size="5.8" text-anchor="start" font-family='"Liberation Sans","Noto Sans CJK SC",sans-serif' font-weight="300" textLength="6" lengthAdjust="spacingAndGlyphs" stroke="#00ffff" stroke-width="0.12">料</text>
<rect x="683" y="373" width="13" height="4.5" fill="#00ffff" stroke="none" stroke-width="1"/>
<rect x="696" y="375" width="3" height="2.5" fill="#0000ff" stroke="none" stroke-width="1"/>
<rect x="698" y="374" width="2" height="3.5" fill="#00ffff" stroke="none" stroke-width="1"/>
<text x="703.5" y="377" fill="#00ffff" font-size="5.8" text-anchor="start" font-family='"Liberation Sans","Noto Sans CJK SC",sans-serif' font-weight="300" textLength="10.5" lengthAdjust="spacingAndGlyphs" stroke="#00ffff" stroke-width="0.12">比例</text>
<text x="722" y="377" fill="#00ffff" font-size="5.8" text-anchor="start" font-family='"Liberation Sans","Noto Sans CJK SC",sans-serif' font-weight="300" textLength="23.5" lengthAdjust="spacingAndGlyphs" stroke="#00ffff" stroke-width="0.12">所在图号</text>
<text x="751" y="377" fill="#00ffff" font-size="5.8" text-anchor="start" font-family='"Liberation Sans","Noto Sans CJK SC",sans-serif' font-weight="300" textLength="23" lengthAdjust="spacingAndGlyphs" stroke="#00ffff" stroke-width="0.12">装配图号</text>
<text x="563.5" y="369" fill="#00ffff" font-size="6.5" text-anchor="start" font-family='"Liberation Sans","Noto Sans CJK SC",sans-serif' textLength="18" lengthAdjust="spacingAndGlyphs" stroke="#00ffff" stroke-width="0.2">36–4</text>
<clipPath id="c3"><path d="M570.5 246.5 L746.5 246.5 L746.5 265.5 L613.5 265.5 L608.5 257.5 L566.5 257.5 L566.5 250.5Z" clip-rule="evenodd"/></clipPath>
<path clip-path="url(#c3)" d="M539.5 246.5 L558.5 265.5 M550.5 246.5 L569.5 265.5 M561.5 246.5 L580.5 265.5 M572.5 246.5 L591.5 265.5 M583.5 246.5 L602.5 265.5 M594.5 246.5 L613.5 265.5 M605.5 246.5 L624.5 265.5 M616.5 246.5 L635.5 265.5 M627.5 246.5 L646.5 265.5 M638.5 246.5 L657.5 265.5 M649.5 246.5 L668.5 265.5 M660.5 246.5 L679.5 265.5 M671.5 246.5 L690.5 265.5 M682.5 246.5 L701.5 265.5 M693.5 246.5 L712.5 265.5 M704.5 246.5 L723.5 265.5 M715.5 246.5 L734.5 265.5 M726.5 246.5 L745.5 265.5 M737.5 246.5 L756.5 265.5 M748.5 246.5 L767.5 265.5 M759.5 246.5 L778.5 265.5 M770.5 246.5 L789.5 265.5" fill="none" stroke="#00ffff" stroke-width="0.8"/>
<clipPath id="c4"><path d="M566.5 287.5 L608.5 287.5 L613.5 278.5 L746.5 278.5 L746.5 297.5 L570.5 297.5 L566.5 293.5Z" clip-rule="evenodd"/></clipPath>
<path clip-path="url(#c4)" d="M543.5 278.5 L562.5 297.5 M554.5 278.5 L573.5 297.5 M565.5 278.5 L584.5 297.5 M576.5 278.5 L595.5 297.5 M587.5 278.5 L606.5 297.5 M598.5 278.5 L617.5 297.5 M609.5 278.5 L628.5 297.5 M620.5 278.5 L639.5 297.5 M631.5 278.5 L650.5 297.5 M642.5 278.5 L661.5 297.5 M653.5 278.5 L672.5 297.5 M664.5 278.5 L683.5 297.5 M675.5 278.5 L694.5 297.5 M686.5 278.5 L705.5 297.5 M697.5 278.5 L716.5 297.5 M708.5 278.5 L727.5 297.5 M719.5 278.5 L738.5 297.5 M730.5 278.5 L749.5 297.5 M741.5 278.5 L760.5 297.5 M752.5 278.5 L771.5 297.5 M763.5 278.5 L782.5 297.5 M774.5 278.5 L793.5 297.5" fill="none" stroke="#00ffff" stroke-width="0.8"/>
<polygon points="566.5,250.5 570.5,246.5 746.5,246.5 746.5,297.5 570.5,297.5 566.5,293.5" fill="none" stroke="#0000ff" stroke-width="1"/>
<polyline points="566.5,257.5 608.5,257.5 613.5,265.5 746.5,265.5" fill="none" stroke="#0000ff" stroke-width="1"/>
<polyline points="566.5,287.5 608.5,287.5 613.5,278.5 746.5,278.5" fill="none" stroke="#0000ff" stroke-width="1"/>
<line x1="608.5" y1="257.5" x2="608.5" y2="287.5" stroke="#0000ff" stroke-width="1"/>
<line x1="613.5" y1="265.5" x2="613.5" y2="278.5" stroke="#0000ff" stroke-width="1"/>
<line x1="569.5" y1="250.5" x2="603" y2="250.5" stroke="#ffffff" stroke-width="1"/>
<line x1="569.5" y1="293.5" x2="603" y2="293.5" stroke="#ffffff" stroke-width="1"/>
<line x1="603" y1="247" x2="608.5" y2="257.5" stroke="#0000ff" stroke-width="1"/>
<line x1="603" y1="297" x2="608.5" y2="287.5" stroke="#0000ff" stroke-width="1"/>
<line x1="550" y1="272.5" x2="766" y2="272.5" stroke="#ff0000" stroke-width="1" stroke-dasharray="13 1 3 1"/>
<polyline points="573,244.5 580.5,238 600,238" fill="none" stroke="#00ff00" stroke-width="1"/>
<circle cx="573" cy="244.5" r="1" fill="#00ff00" stroke="#00ff00" stroke-width="1"/>
<text x="582" y="237" fill="#00ff00" font-size="6.5" text-anchor="start" font-family='"Liberation Sans","Noto Sans CJK SC",sans-serif' textLength="18" lengthAdjust="spacingAndGlyphs" stroke="#00ff00" stroke-width="0.35">4×45°</text>
<line x1="554" y1="257.5" x2="566" y2="257.5" stroke="#00ff00" stroke-width="1"/>
<line x1="554" y1="287.5" x2="566" y2="287.5" stroke="#00ff00" stroke-width="1"/>
<line x1="559.5" y1="257.5" x2="559.5" y2="287.5" stroke="#00ff00" stroke-width="1"/>
<polygon points="559.5,257.5 558.5,262.5 560.5,262.5" fill="#00ff00" stroke="#00ff00" stroke-width="1"/>
<polygon points="559.5,287.5 558.5,282.5 560.5,282.5" fill="#00ff00" stroke="#00ff00" stroke-width="1"/>
<text x="557.5" y="279" fill="#00ff00" font-size="6.5" text-anchor="start" font-family='"Liberation Sans","Noto Sans CJK SC",sans-serif' transform="rotate(-90 557.5 279)" textLength="12" lengthAdjust="spacingAndGlyphs" stroke="#00ff00" stroke-width="0.35">ϕ25</text>
<line x1="746.5" y1="246.5" x2="763" y2="246.5" stroke="#00ff00" stroke-width="1"/>
<line x1="746.5" y1="297.5" x2="763" y2="297.5" stroke="#00ff00" stroke-width="1"/>
<line x1="759.5" y1="246.5" x2="759.5" y2="297.5" stroke="#00ff00" stroke-width="1"/>
<text x="758" y="279" fill="#00ff00" font-size="6.5" text-anchor="start" font-family='"Liberation Sans","Noto Sans CJK SC",sans-serif' transform="rotate(-90 758 279)" textLength="12" lengthAdjust="spacingAndGlyphs" stroke="#00ff00" stroke-width="0.35">ϕ42</text>
<line x1="566.5" y1="297.5" x2="566.5" y2="331" stroke="#00ff00" stroke-width="1"/>
<line x1="602.5" y1="297.5" x2="602.5" y2="311" stroke="#00ff00" stroke-width="1"/>
<line x1="608.5" y1="297.5" x2="608.5" y2="321" stroke="#00ff00" stroke-width="1"/>
<line x1="746.5" y1="297.5" x2="746.5" y2="331" stroke="#00ff00" stroke-width="1"/>
<line x1="566.5" y1="306.5" x2="602.5" y2="306.5" stroke="#00ff00" stroke-width="1"/>
<line x1="566.5" y1="316.5" x2="608.5" y2="316.5" stroke="#00ff00" stroke-width="1"/>
<line x1="566.5" y1="327.5" x2="746.5" y2="327.5" stroke="#00ff00" stroke-width="1"/>
<rect x="568" y="305" width="3" height="3" fill="#00ff00" stroke="none" stroke-width="1"/>
<rect x="598" y="305" width="3" height="3" fill="#00ff00" stroke="none" stroke-width="1"/>
<rect x="568" y="316" width="3" height="2" fill="#00ff00" stroke="none" stroke-width="1"/>
<rect x="604" y="316" width="3" height="2" fill="#00ff00" stroke="none" stroke-width="1"/>
<rect x="568" y="326" width="3" height="2" fill="#00ff00" stroke="none" stroke-width="1"/>
<rect x="742" y="326" width="3" height="2" fill="#00ff00" stroke="none" stroke-width="1"/>
<text x="584.5" y="306" fill="#00ff00" font-size="6.5" text-anchor="middle" font-family='"Liberation Sans","Noto Sans CJK SC",sans-serif' stroke="#00ff00" stroke-width="0.35">30</text>
<text x="587" y="316" fill="#00ff00" font-size="6.5" text-anchor="middle" font-family='"Liberation Sans","Noto Sans CJK SC",sans-serif' stroke="#00ff00" stroke-width="0.35">35</text>
<text x="656.5" y="327" fill="#00ff00" font-size="6.5" text-anchor="middle" font-family='"Liberation Sans","Noto Sans CJK SC",sans-serif' stroke="#00ff00" stroke-width="0.35">150</text>
<path d="M603.49 252.01 A26 26 0 0 0 603.49 292.99" fill="none" stroke="#00ff00" stroke-width="1"/>
<line x1="603" y1="247" x2="608.5" y2="257.5" stroke="#00ff00" stroke-width="1"/>
<line x1="603" y1="297" x2="608.5" y2="287.5" stroke="#00ff00" stroke-width="1"/>
<text x="592.5" y="279" fill="#00ff00" font-size="6" text-anchor="start" font-family='"Liberation Sans","Noto Sans CJK SC",sans-serif' transform="rotate(-90 592.5 279)" textLength="12" lengthAdjust="spacingAndGlyphs" stroke="#00ff00" stroke-width="0.35">120°</text>
<line x1="660.5" y1="265.5" x2="660.5" y2="278.5" stroke="#00ff00" stroke-width="1"/>
<text x="659" y="278.5" fill="#00ff00" font-size="6.5" text-anchor="start" font-family='"Liberation Sans","Noto Sans CJK SC",sans-serif' transform="rotate(-90 659 278.5)" textLength="12" lengthAdjust="spacingAndGlyphs" stroke="#00ff00" stroke-width="0.35">ϕ11</text>
<polygon points="573.5,280.5 581,280.5 577.5,287.5" fill="none" stroke="#ffffff" stroke-width="1"/>
<line x1="581" y1="280.5" x2="585" y2="274" stroke="#ffffff" stroke-width="1"/>
<text x="578.5" y="279.5" fill="#ffffff" font-size="6.5" text-anchor="middle" font-family='"Liberation Sans","Noto Sans CJK SC",sans-serif' textLength="13" lengthAdjust="spacingAndGlyphs" stroke="#ffffff" stroke-width="0.35">12.5</text>
<polygon points="556.5,297.5 565,297.5 561.5,288" fill="none" stroke="#ffffff" stroke-width="1"/>
<line x1="556.5" y1="297.5" x2="554" y2="300" stroke="#ffffff" stroke-width="1"/>
<text x="561.5" y="297" fill="#ffffff" font-size="5" text-anchor="middle" font-family='"Liberation Sans","Noto Sans CJK SC",sans-serif' stroke="#ffffff" stroke-width="0.35">6.3</text>
<polygon points="753.4,218.3 761.7,218.3 757.4,225.8" fill="none" stroke="#ffffff" stroke-width="1"/>
<line x1="761.7" y1="218.3" x2="764.9" y2="212.3" stroke="#ffffff" stroke-width="1"/>
<text x="757.9" y="217.8" fill="#ffffff" font-size="6" text-anchor="middle" font-family='"Liberation Sans","Noto Sans CJK SC",sans-serif' stroke="#ffffff" stroke-width="0.35">25</text>
<text x="725.6" y="223.8" fill="#ffffff" font-size="8.5" text-anchor="start" font-family='"Liberation Sans","Noto Sans CJK SC",sans-serif' font-weight="300" textLength="20.5" lengthAdjust="spacingAndGlyphs" stroke="#ffffff" stroke-width="0.2">其余:</text>
<line x1="804.5" y1="361.5" x2="1020.5" y2="361.5" stroke="#0000ff" stroke-width="1"/>
<line x1="804.5" y1="361.5" x2="804.5" y2="378.5" stroke="#0000ff" stroke-width="1"/>
<line x1="804.5" y1="370.5" x2="1020.5" y2="370.5" stroke="#ffffff" stroke-width="1"/>
<line x1="822.5" y1="361.5" x2="822.5" y2="378.5" stroke="#ffffff" stroke-width="1"/>
<line x1="888.5" y1="361.5" x2="888.5" y2="378.5" stroke="#ffffff" stroke-width="1"/>
<line x1="924.5" y1="361.5" x2="924.5" y2="378.5" stroke="#ffffff" stroke-width="1"/>
<line x1="942.5" y1="361.5" x2="942.5" y2="378.5" stroke="#ffffff" stroke-width="1"/>
<line x1="960.5" y1="361.5" x2="960.5" y2="378.5" stroke="#ffffff" stroke-width="1"/>
<line x1="990.5" y1="361.5" x2="990.5" y2="378.5" stroke="#ffffff" stroke-width="1"/>
<text x="851.5" y="368.5" fill="#00ffff" font-size="5.6" text-anchor="middle" font-family='"Liberation Sans","Noto Sans CJK SC",sans-serif' font-weight="300" stroke="#00ffff" stroke-width="0.12">螺帽</text>
<text x="906.5" y="368.5" fill="#00ffff" font-size="5.6" text-anchor="middle" font-family='"Liberation Sans","Noto Sans CJK SC",sans-serif' font-weight="300" stroke="#00ffff" stroke-width="0.12">黄铜</text>
<text x="933.5" y="368.5" fill="#00ffff" font-size="6.3" text-anchor="middle" font-family='"Liberation Sans","Noto Sans CJK SC",sans-serif' stroke="#00ffff" stroke-width="0.3">0.2</text>
<text x="951.5" y="368.5" fill="#00ffff" font-size="6.3" text-anchor="middle" font-family='"Liberation Sans","Noto Sans CJK SC",sans-serif' stroke="#00ffff" stroke-width="0.3">1:1</text>
<text x="807.5" y="377" fill="#00ffff" font-size="5.8" text-anchor="start" font-family='"Liberation Sans","Noto Sans CJK SC",sans-serif' font-weight="300" textLength="10.5" lengthAdjust="spacingAndGlyphs" stroke="#00ffff" stroke-width="0.12">件号</text>
<text x="843" y="377" fill="#00ffff" font-size="5.8" text-anchor="start" font-family='"Liberation Sans","Noto Sans CJK SC",sans-serif' font-weight="300" textLength="6" lengthAdjust="spacingAndGlyphs" stroke="#00ffff" stroke-width="0.12">名</text>
<text x="868" y="377" fill="#00ffff" font-size="5.8" text-anchor="start" font-family='"Liberation Sans","Noto Sans CJK SC",sans-serif' font-weight="300" textLength="6" lengthAdjust="spacingAndGlyphs" stroke="#00ffff" stroke-width="0.12">称</text>
<text x="899" y="377" fill="#00ffff" font-size="5.8" text-anchor="start" font-family='"Liberation Sans","Noto Sans CJK SC",sans-serif' font-weight="300" textLength="6" lengthAdjust="spacingAndGlyphs" stroke="#00ffff" stroke-width="0.12">材</text>
<text x="913" y="377" fill="#00ffff" font-size="5.8" text-anchor="start" font-family='"Liberation Sans","Noto Sans CJK SC",sans-serif' font-weight="300" textLength="6" lengthAdjust="spacingAndGlyphs" stroke="#00ffff" stroke-width="0.12">料</text>
<rect x="925" y="373" width="13" height="4.5" fill="#00ffff" stroke="none" stroke-width="1"/>
<rect x="938" y="375" width="3" height="2.5" fill="#0000ff" stroke="none" stroke-width="1"/>
<rect x="940" y="374" width="2" height="3.5" fill="#00ffff" stroke="none" stroke-width="1"/>
<text x="945.5" y="377" fill="#00ffff" font-size="5.8" text-anchor="start" font-family='"Liberation Sans","Noto Sans CJK SC",sans-serif' font-weight="300" textLength="10.5" lengthAdjust="spacingAndGlyphs" stroke="#00ffff" stroke-width="0.12">比例</text>
<text x="964" y="377" fill="#00ffff" font-size="5.8" text-anchor="start" font-family='"Liberation Sans","Noto Sans CJK SC",sans-serif' font-weight="300" textLength="23.5" lengthAdjust="spacingAndGlyphs" stroke="#00ffff" stroke-width="0.12">所在图号</text>
<text x="993" y="377" fill="#00ffff" font-size="5.8" text-anchor="start" font-family='"Liberation Sans","Noto Sans CJK SC",sans-serif' font-weight="300" textLength="23" lengthAdjust="spacingAndGlyphs" stroke="#00ffff" stroke-width="0.12">装配图号</text>
<text x="806.5" y="369" fill="#00ffff" font-size="7.3" text-anchor="start" font-family='"Liberation Sans","Noto Sans CJK SC",sans-serif' textLength="16" lengthAdjust="spacingAndGlyphs" stroke="#00ffff" stroke-width="0.15">36–1</text>
<clipPath id="c5"><path d="M854.5 109.5 L860.5 105.5 L921.5 105.5 L927.5 109.5 L927.5 142.5 L920.5 146.5 L861.5 146.5 L854.5 142.5Z M884.5 105.5 L897.5 105.5 L897.5 117.5 L916.5 117.5 L916.5 123.5 L912.5 123.5 L912.5 146.5 L869.5 146.5 L869.5 123.5 L865.5 123.5 L865.5 117.5 L884.5 117.5Z" clip-rule="evenodd"/></clipPath>
<path clip-path="url(#c5)" d="M808.2 105.5 L849.2 146.5 M813.5 105.5 L854.5 146.5 M818.8 105.5 L859.8 146.5 M824.1 105.5 L865.1 146.5 M829.4 105.5 L870.4 146.5 M834.7 105.5 L875.7 146.5 M840 105.5 L881 146.5 M845.3 105.5 L886.3 146.5 M850.6 105.5 L891.6 146.5 M855.9 105.5 L896.9 146.5 M861.2 105.5 L902.2 146.5 M866.5 105.5 L907.5 146.5 M871.8 105.5 L912.8 146.5 M877.1 105.5 L918.1 146.5 M882.4 105.5 L923.4 146.5 M887.7 105.5 L928.7 146.5 M893 105.5 L934 146.5 M898.3 105.5 L939.3 146.5 M903.6 105.5 L944.6 146.5 M908.9 105.5 L949.9 146.5 M914.2 105.5 L955.2 146.5 M919.5 105.5 L960.5 146.5 M924.8 105.5 L965.8 146.5 M930.1 105.5 L971.1 146.5 M935.4 105.5 L976.4 146.5 M940.7 105.5 L981.7 146.5 M946 105.5 L987 146.5 M951.3 105.5 L992.3 146.5 M956.6 105.5 L997.6 146.5 M961.9 105.5 L1002.9 146.5 M967.2 105.5 L1008.2 146.5 M972.5 105.5 L1013.5 146.5" fill="none" stroke="#00ffff" stroke-width="0.8"/>
<polygon points="854.5,109.5 860.5,105.5 921.5,105.5 927.5,109.5 927.5,142.5 920.5,146.5 861.5,146.5 854.5,142.5" fill="none" stroke="#0000ff" stroke-width="1"/>
<polyline points="884.5,105.5 884.5,117.5 865.5,117.5 865.5,123.5" fill="none" stroke="#0000ff" stroke-width="1"/>
<polyline points="897.5,105.5 897.5,117.5 916.5,117.5 916.5,123.5" fill="none" stroke="#0000ff" stroke-width="1"/>
<line x1="865.5" y1="123.5" x2="916.5" y2="123.5" stroke="#0000ff" stroke-width="1"/>
<polyline points="869.5,123.5 869.5,145.5 912.5,145.5 912.5,123.5" fill="none" stroke="#0000ff" stroke-width="1"/>
<line x1="866.5" y1="123.5" x2="866.5" y2="146.5" stroke="#ffffff" stroke-width="1"/>
<line x1="916.5" y1="123.5" x2="916.5" y2="146.5" stroke="#ffffff" stroke-width="1"/>
<line x1="890.5" y1="96.5" x2="890.5" y2="155.5" stroke="#ff0000" stroke-width="1" stroke-dasharray="14 2 2 2"/>
<line x1="860.5" y1="105.5" x2="906" y2="79.7" stroke="#00ff00" stroke-width="1"/>
<line x1="921.5" y1="105.5" x2="875.5" y2="79.7" stroke="#00ff00" stroke-width="1"/>
<path d="M875.24 79.76 A22.8 22.8 0 0 1 905.76 79.76" fill="none" stroke="#00ff00" stroke-width="1"/>
<polygon points="875.5,79.7 880.5,77 879.5,79.5" fill="#00ff00" stroke="#00ff00" stroke-width="1"/>
<polygon points="906,79.7 901,77 902,79.5" fill="#00ff00" stroke="#00ff00" stroke-width="1"/>
<text x="893.5" y="74" fill="#00ff00" font-size="7.5" text-anchor="middle" font-family='"Liberation Sans","Noto Sans CJK SC",sans-serif' textLength="13.5" lengthAdjust="spacingAndGlyphs" stroke="#00ff00" stroke-width="0.35">120°</text>
<line x1="884.5" y1="97.5" x2="884.5" y2="105.5" stroke="#00ff00" stroke-width="1"/>
<line x1="897.5" y1="97.5" x2="897.5" y2="105.5" stroke="#00ff00" stroke-width="1"/>
<line x1="884.5" y1="102.5" x2="897.5" y2="102.5" stroke="#00ff00" stroke-width="1"/>
<text x="891" y="102" fill="#00ff00" font-size="6.5" text-anchor="middle" font-family='"Liberation Sans","Noto Sans CJK SC",sans-serif' textLength="11" lengthAdjust="spacingAndGlyphs" stroke="#00ff00" stroke-width="0.35">ϕ11</text>
<line x1="921.5" y1="105.5" x2="959" y2="105.5" stroke="#00ff00" stroke-width="1"/>
<line x1="921.5" y1="146.5" x2="959" y2="146.5" stroke="#00ff00" stroke-width="1"/>
<line x1="954.5" y1="105.5" x2="954.5" y2="146.5" stroke="#00ff00" stroke-width="1"/>
<polygon points="954.5,105.5 953.5,109.5 955.5,109.5" fill="#00ff00" stroke="#00ff00" stroke-width="1"/>
<polygon points="954.5,146.5 953.5,142.5 955.5,142.5" fill="#00ff00" stroke="#00ff00" stroke-width="1"/>
<text x="953" y="130" fill="#00ff00" font-size="6.5" text-anchor="start" font-family='"Liberation Sans","Noto Sans CJK SC",sans-serif' transform="rotate(-90 953 130)" stroke="#00ff00" stroke-width="0.35">35</text>
<line x1="937.5" y1="109" x2="937.5" y2="146.5" stroke="#00ff00" stroke-width="1"/>
<line x1="916.5" y1="117.5" x2="941" y2="117.5" stroke="#00ff00" stroke-width="1"/>
<line x1="916.5" y1="123.5" x2="941" y2="123.5" stroke="#00ff00" stroke-width="1"/>
<text x="936" y="123" fill="#00ff00" font-size="6.5" text-anchor="start" font-family='"Liberation Sans","Noto Sans CJK SC",sans-serif' transform="rotate(-90 936 123)" stroke="#00ff00" stroke-width="0.35">5</text>
<text x="936" y="138.5" fill="#00ff00" font-size="6.5" text-anchor="start" font-family='"Liberation Sans","Noto Sans CJK SC",sans-serif' transform="rotate(-90 936 138.5)" stroke="#00ff00" stroke-width="0.35">20</text>
<line x1="864.5" y1="146.5" x2="864.5" y2="169" stroke="#00ff00" stroke-width="1"/>
<line x1="917.5" y1="146.5" x2="917.5" y2="169" stroke="#00ff00" stroke-width="1"/>
<line x1="866.5" y1="159.5" x2="913" y2="159.5" stroke="#00ff00" stroke-width="1"/>
<line x1="864.5" y1="166.5" x2="917.5" y2="166.5" stroke="#00ff00" stroke-width="1"/>
<rect x="867" y="158" width="4" height="3" fill="#00ff00" stroke="none" stroke-width="1"/>
<rect x="909" y="158" width="4" height="3" fill="#00ff00" stroke="none" stroke-width="1"/>
<rect x="866" y="165" width="4" height="3" fill="#00ff00" stroke="none" stroke-width="1"/>
<rect x="912" y="165" width="4" height="3" fill="#00ff00" stroke="none" stroke-width="1"/>
<text x="891" y="159" fill="#00ff00" font-size="6.5" text-anchor="middle" font-family='"Liberation Sans","Noto Sans CJK SC",sans-serif' textLength="12" lengthAdjust="spacingAndGlyphs" stroke="#00ff00" stroke-width="0.35">M42</text>
<text x="891" y="166" fill="#00ff00" font-size="6.5" text-anchor="middle" font-family='"Liberation Sans","Noto Sans CJK SC",sans-serif' textLength="12" lengthAdjust="spacingAndGlyphs" stroke="#00ff00" stroke-width="0.35">ϕ44</text>
<line x1="864.5" y1="146.5" x2="846" y2="158" stroke="#00ff00" stroke-width="1"/>
<line x1="917.5" y1="146.5" x2="934" y2="158" stroke="#00ff00" stroke-width="1"/>
<path d="M846.51 158 A55.6 55.6 0 0 0 934.49 158" fill="none" stroke="#00ff00" stroke-width="1"/>
<text x="895" y="180.5" fill="#00ff00" font-size="7.5" text-anchor="middle" font-family='"Liberation Sans","Noto Sans CJK SC",sans-serif' textLength="13.5" lengthAdjust="spacingAndGlyphs" stroke="#00ff00" stroke-width="0.35">120°</text>
<circle cx="931" cy="158.5" r="1.2" fill="#00ff00" stroke="#00ff00" stroke-width="1"/>
<polygon points="867,153 876,149 876,157" fill="none" stroke="#ffffff" stroke-width="1"/>
<line x1="876" y1="157" x2="879" y2="159" stroke="#ffffff" stroke-width="1"/>
<text x="872" y="155.5" fill="#ffffff" font-size="4" text-anchor="middle" font-family='"Liberation Sans","Noto Sans CJK SC",sans-serif' stroke="#ffffff" stroke-width="0.2">12.5</text>
<polygon points="990.5,54 998.8,54 994.5,61.5" fill="none" stroke="#ffffff" stroke-width="1"/>
<line x1="998.8" y1="54" x2="1002" y2="48" stroke="#ffffff" stroke-width="1"/>
<text x="995.3" y="53.5" fill="#ffffff" font-size="6" text-anchor="middle" font-family='"Liberation Sans","Noto Sans CJK SC",sans-serif' textLength="10.5" lengthAdjust="spacingAndGlyphs" stroke="#ffffff" stroke-width="0.35">12.5</text>
<text x="962.5" y="61.5" fill="#ffffff" font-size="8.5" text-anchor="start" font-family='"Liberation Sans","Noto Sans CJK SC",sans-serif' font-weight="300" textLength="20.5" lengthAdjust="spacingAndGlyphs" stroke="#ffffff" stroke-width="0.2">其余:</text>
<polygon points="927,239.5 909,208.5 872,208.5 854,239.5 872,270.5 909,270.5" fill="none" stroke="#0000ff" stroke-width="1"/>
<circle cx="890.5" cy="239.5" r="30.8" fill="none" stroke="#0000ff" stroke-width="1"/>
<circle cx="890.5" cy="239.5" r="25.4" fill="none" stroke="#ffffff" stroke-width="1"/>
<circle cx="890.5" cy="239.5" r="6.6" fill="none" stroke="#0000ff" stroke-width="1"/>
<line x1="848" y1="239.5" x2="936.5" y2="239.5" stroke="#ff0000" stroke-width="1"/>
<line x1="890.5" y1="197" x2="890.5" y2="276" stroke="#ff0000" stroke-width="1"/>
<line x1="858.8" y1="261.5" x2="934.5" y2="210.6" stroke="#00ff00" stroke-width="1"/>
<text x="921" y="214.5" fill="#00ff00" font-size="7" text-anchor="start" font-family='"Liberation Sans","Noto Sans CJK SC",sans-serif' transform="rotate(-33 921 214.5)" textLength="12" lengthAdjust="spacingAndGlyphs" stroke="#00ff00" stroke-width="0.35">ϕ52</text>
<line x1="854.5" y1="239.5" x2="854.5" y2="284.5" stroke="#00ff00" stroke-width="1"/>
<line x1="927.5" y1="239.5" x2="927.5" y2="284.5" stroke="#00ff00" stroke-width="1"/>
<line x1="854.5" y1="280.5" x2="927.5" y2="280.5" stroke="#00ff00" stroke-width="1"/>
<rect x="856" y="279.5" width="4" height="2" fill="#00ff00" stroke="none" stroke-width="1"/>
<rect x="922" y="279.5" width="4" height="2" fill="#00ff00" stroke="none" stroke-width="1"/>
<text x="891" y="280" fill="#00ff00" font-size="6.5" text-anchor="middle" font-family='"Liberation Sans","Noto Sans CJK SC",sans-serif' textLength="18" lengthAdjust="spacingAndGlyphs" stroke="#00ff00" stroke-width="0.35">80.04</text>
<line x1="319.5" y1="706.5" x2="536.5" y2="706.5" stroke="#0000ff" stroke-width="1"/>
<line x1="319.5" y1="706.5" x2="319.5" y2="723.5" stroke="#0000ff" stroke-width="1"/>
<line x1="319.5" y1="715.5" x2="536.5" y2="715.5" stroke="#ffffff" stroke-width="1"/>
<line x1="337.5" y1="706.5" x2="337.5" y2="723.5" stroke="#ffffff" stroke-width="1"/>
<line x1="403.5" y1="706.5" x2="403.5" y2="723.5" stroke="#ffffff" stroke-width="1"/>
<line x1="439.5" y1="706.5" x2="439.5" y2="723.5" stroke="#ffffff" stroke-width="1"/>
<line x1="457.5" y1="706.5" x2="457.5" y2="723.5" stroke="#ffffff" stroke-width="1"/>
<line x1="475.5" y1="706.5" x2="475.5" y2="723.5" stroke="#ffffff" stroke-width="1"/>
<line x1="505.5" y1="706.5" x2="505.5" y2="723.5" stroke="#ffffff" stroke-width="1"/>
<text x="328.5" y="713.5" fill="#00ffff" font-size="6.3" text-anchor="middle" font-family='"Liberation Sans","Noto Sans CJK SC",sans-serif' stroke="#00ffff" stroke-width="0.3">33</text>
<text x="366.5" y="713.5" fill="#00ffff" font-size="5.6" text-anchor="middle" font-family='"Liberation Sans","Noto Sans CJK SC",sans-serif' font-weight="300" stroke="#00ffff" stroke-width="0.12">吊耳</text>
<text x="421.5" y="713.5" fill="#00ffff" font-size="6.3" text-anchor="middle" font-family='"Liberation Sans","Noto Sans CJK SC",sans-serif' stroke="#00ffff" stroke-width="0.3">20</text>
<text x="448.5" y="713.5" fill="#00ffff" font-size="6.3" text-anchor="middle" font-family='"Liberation Sans","Noto Sans CJK SC",sans-serif' stroke="#00ffff" stroke-width="0.3">0.5</text>
<text x="466.5" y="713.5" fill="#00ffff" font-size="6.3" text-anchor="middle" font-family='"Liberation Sans","Noto Sans CJK SC",sans-serif' stroke="#00ffff" stroke-width="0.3">1:1</text>
<text x="322.5" y="722" fill="#00ffff" font-size="5.8" text-anchor="start" font-family='"Liberation Sans","Noto Sans CJK SC",sans-serif' font-weight="300" textLength="10.5" lengthAdjust="spacingAndGlyphs" stroke="#00ffff" stroke-width="0.12">件号</text>
<text x="358" y="722" fill="#00ffff" font-size="5.8" text-anchor="start" font-family='"Liberation Sans","Noto Sans CJK SC",sans-serif' font-weight="300" textLength="6" lengthAdjust="spacingAndGlyphs" stroke="#00ffff" stroke-width="0.12">名</text>
<text x="383" y="722" fill="#00ffff" font-size="5.8" text-anchor="start" font-family='"Liberation Sans","Noto Sans CJK SC",sans-serif' font-weight="300" textLength="6" lengthAdjust="spacingAndGlyphs" stroke="#00ffff" stroke-width="0.12">称</text>
<text x="414" y="722" fill="#00ffff" font-size="5.8" text-anchor="start" font-family='"Liberation Sans","Noto Sans CJK SC",sans-serif' font-weight="300" textLength="6" lengthAdjust="spacingAndGlyphs" stroke="#00ffff" stroke-width="0.12">材</text>
<text x="428" y="722" fill="#00ffff" font-size="5.8" text-anchor="start" font-family='"Liberation Sans","Noto Sans CJK SC",sans-serif' font-weight="300" textLength="6" lengthAdjust="spacingAndGlyphs" stroke="#00ffff" stroke-width="0.12">料</text>
<rect x="440" y="718" width="13" height="4.5" fill="#00ffff" stroke="none" stroke-width="1"/>
<rect x="453" y="720" width="3" height="2.5" fill="#0000ff" stroke="none" stroke-width="1"/>
<rect x="455" y="719" width="2" height="3.5" fill="#00ffff" stroke="none" stroke-width="1"/>
<rect x="459.5" y="718" width="12" height="4.5" fill="#00ffff" stroke="none" stroke-width="1"/>
<text x="479" y="722" fill="#00ffff" font-size="5.8" text-anchor="start" font-family='"Liberation Sans","Noto Sans CJK SC",sans-serif' font-weight="300" textLength="23.5" lengthAdjust="spacingAndGlyphs" stroke="#00ffff" stroke-width="0.12">所在图号</text>
<text x="508" y="722" fill="#00ffff" font-size="5.8" text-anchor="start" font-family='"Liberation Sans","Noto Sans CJK SC",sans-serif' font-weight="300" textLength="23" lengthAdjust="spacingAndGlyphs" stroke="#00ffff" stroke-width="0.12">装配图号</text>
<path d="M140.5 590.5 L166.88 514.64 A48.3 48.3 0 0 1 257.93 514.11 L285.5 590.5 Z" fill="none" stroke="#0000ff"/>
<line x1="146.06" y1="574.5" x2="279.73" y2="574.5" stroke="#0000ff" stroke-width="1"/>
<line x1="142.93" y1="583.5" x2="282.97" y2="583.5" stroke="#0000ff" stroke-width="1"/>
<circle cx="212.5" cy="530.5" r="19.7" fill="none" stroke="#0000ff" stroke-width="1"/>
<circle cx="212.5" cy="530.5" r="18" fill="none" stroke="#0000ff" stroke-width="1"/>
<line x1="142.5" y1="530.5" x2="424" y2="530.5" stroke="#ff0000" stroke-width="1" stroke-dasharray="13 1 3 1"/>
<line x1="212.5" y1="463.5" x2="212.5" y2="620.5" stroke="#ff0000" stroke-width="1" stroke-dasharray="13 1 3 1"/>
<line x1="235" y1="489.5" x2="227.5" y2="508" stroke="#00ff00" stroke-width="1"/>
<text x="226" y="509" fill="#00ff00" font-size="6.5" text-anchor="start" font-family='"Liberation Sans","Noto Sans CJK SC",sans-serif' transform="rotate(-67 226 509)" textLength="12" lengthAdjust="spacingAndGlyphs" stroke="#00ff00" stroke-width="0.35">R40</text>
<line x1="199.5" y1="520" x2="227.5" y2="539.5" stroke="#00ff00" stroke-width="1"/>
<text x="205.5" y="523" fill="#00ff00" font-size="6.5" text-anchor="start" font-family='"Liberation Sans","Noto Sans CJK SC",sans-serif' transform="rotate(34 205.5 523)" textLength="12" lengthAdjust="spacingAndGlyphs" stroke="#00ff00" stroke-width="0.35">ϕ32</text>
<line x1="303.5" y1="530.5" x2="303.5" y2="590.5" stroke="#00ff00" stroke-width="1"/>
<line x1="285.5" y1="590.5" x2="308" y2="590.5" stroke="#00ff00" stroke-width="1"/>
<polygon points="303.5,530.5 302.5,534.5 304.5,534.5" fill="#00ff00" stroke="#00ff00" stroke-width="1"/>
<polygon points="303.5,590.5 302.5,586.5 304.5,586.5" fill="#00ff00" stroke="#00ff00" stroke-width="1"/>
<text x="302" y="565" fill="#00ff00" font-size="6.5" text-anchor="start" font-family='"Liberation Sans","Noto Sans CJK SC",sans-serif' transform="rotate(-90 302 565)" stroke="#00ff00" stroke-width="0.35">50</text>
<line x1="140.5" y1="590.5" x2="140.5" y2="615.5" stroke="#00ff00" stroke-width="1"/>
<line x1="285.5" y1="590.5" x2="285.5" y2="615.5" stroke="#00ff00" stroke-width="1"/>
<line x1="140.5" y1="611.5" x2="285.5" y2="611.5" stroke="#00ff00" stroke-width="1"/>
<rect x="142" y="610" width="5" height="3" fill="#00ff00" stroke="none" stroke-width="1"/>
<rect x="279" y="610" width="5" height="3" fill="#00ff00" stroke="none" stroke-width="1"/>
<text x="214" y="610.5" fill="#00ff00" font-size="6.5" text-anchor="middle" font-family='"Liberation Sans","Noto Sans CJK SC",sans-serif' textLength="12" lengthAdjust="spacingAndGlyphs" stroke="#00ff00" stroke-width="0.35">120</text>
<clipPath id="c6"><path d="M383.5 482.5 L403.5 482.5 L403.5 511.5 L383.5 511.5Z" clip-rule="evenodd"/></clipPath>
<path clip-path="url(#c6)" d="M350.1 482.5 L379.1 511.5 M355.5 482.5 L384.5 511.5 M360.9 482.5 L389.9 511.5 M366.3 482.5 L395.3 511.5 M371.7 482.5 L400.7 511.5 M377.1 482.5 L406.1 511.5 M382.5 482.5 L411.5 511.5 M387.9 482.5 L416.9 511.5 M393.3 482.5 L422.3 511.5 M398.7 482.5 L427.7 511.5 M404.1 482.5 L433.1 511.5 M409.5 482.5 L438.5 511.5 M414.9 482.5 L443.9 511.5 M420.3 482.5 L449.3 511.5 M425.7 482.5 L454.7 511.5 M431.1 482.5 L460.1 511.5 M436.5 482.5 L465.5 511.5" fill="none" stroke="#00ffff" stroke-width="0.8"/>
<clipPath id="c7"><path d="M383.5 548.5 L403.5 548.5 L403.5 573.5 L393.5 583.5 L383.5 573.5Z" clip-rule="evenodd"/></clipPath>
<path clip-path="url(#c7)" d="M346.1 548.5 L381.1 583.5 M351.5 548.5 L386.5 583.5 M356.9 548.5 L391.9 583.5 M362.3 548.5 L397.3 583.5 M367.7 548.5 L402.7 583.5 M373.1 548.5 L408.1 583.5 M378.5 548.5 L413.5 583.5 M383.9 548.5 L418.9 583.5 M389.3 548.5 L424.3 583.5 M394.7 548.5 L429.7 583.5 M400.1 548.5 L435.1 583.5 M405.5 548.5 L440.5 583.5 M410.9 548.5 L445.9 583.5 M416.3 548.5 L451.3 583.5 M421.7 548.5 L456.7 583.5 M427.1 548.5 L462.1 583.5 M432.5 548.5 L467.5 583.5 M437.9 548.5 L472.9 583.5 M443.3 548.5 L478.3 583.5" fill="none" stroke="#00ffff" stroke-width="0.8"/>
<polygon points="383.5,482.5 403.5,482.5 403.5,573.5 394.5,583.5 394.5,590.5 392.5,590.5 392.5,583.5 383.5,573.5" fill="none" stroke="#0000ff" stroke-width="1"/>
<line x1="383.5" y1="511.5" x2="403.5" y2="511.5" stroke="#0000ff" stroke-width="1"/>
<line x1="383.5" y1="548.5" x2="403.5" y2="548.5" stroke="#0000ff" stroke-width="1"/>
<line x1="385.5" y1="511.5" x2="385.5" y2="548.5" stroke="#0000ff" stroke-width="1"/>
<line x1="401.5" y1="511.5" x2="401.5" y2="548.5" stroke="#0000ff" stroke-width="1"/>
<line x1="383.5" y1="469.5" x2="383.5" y2="482" stroke="#00ff00" stroke-width="1"/>
<line x1="403.5" y1="469.5" x2="403.5" y2="482" stroke="#00ff00" stroke-width="1"/>
<line x1="383.5" y1="473.5" x2="403.5" y2="473.5" stroke="#00ff00" stroke-width="1"/>
<rect x="384.5" y="472.5" width="3" height="2" fill="#00ff00" stroke="none" stroke-width="1"/>
<rect x="399.5" y="472.5" width="3" height="2" fill="#00ff00" stroke="none" stroke-width="1"/>
<text x="393.5" y="472" fill="#00ff00" font-size="6.5" text-anchor="middle" font-family='"Liberation Sans","Noto Sans CJK SC",sans-serif' stroke="#00ff00" stroke-width="0.35">18</text>
<polyline points="403.5,510.5 417.5,498.5 453,498.5" fill="none" stroke="#00ff00" stroke-width="1"/>
<text x="428" y="496.5" fill="#00ff00" font-size="6.5" text-anchor="start" font-family='"Liberation Sans","Noto Sans CJK SC",sans-serif' textLength="19.5" lengthAdjust="spacingAndGlyphs" stroke="#00ff00" stroke-width="0.35">1×45°</text>
<line x1="363" y1="553.5" x2="383.5" y2="573.5" stroke="#00ff00" stroke-width="1"/>
<line x1="423.5" y1="553.5" x2="403.5" y2="573.5" stroke="#00ff00" stroke-width="1"/>
<line x1="349.5" y1="590.5" x2="438" y2="590.5" stroke="#00ff00" stroke-width="1"/>
<path d="M353 590.5 A42 42 0 0 1 364.6 558.6" fill="none" stroke="#00ff00"/>
<path d="M434.4 590.5 A42 42 0 0 0 422.8 558.6" fill="none" stroke="#00ff00"/>
<circle cx="364.6" cy="559.3" r="1.1" fill="#00ff00" stroke="#00ff00" stroke-width="1"/>
<circle cx="422.8" cy="559.3" r="1.1" fill="#00ff00" stroke="#00ff00" stroke-width="1"/>
<rect x="352" y="585" width="2" height="4" fill="#00ff00" stroke="none" stroke-width="1"/>
<rect x="433.5" y="585" width="2" height="4" fill="#00ff00" stroke="none" stroke-width="1"/>
<text x="351.5" y="580.5" fill="#00ff00" font-size="6.8" text-anchor="start" font-family='"Liberation Sans","Noto Sans CJK SC",sans-serif' transform="rotate(-69 351.5 580.5)" textLength="18.5" lengthAdjust="spacingAndGlyphs" stroke="#00ff00" stroke-width="0.35">45±5°</text>
<text x="427.2" y="564.6" fill="#00ff00" font-size="6.8" text-anchor="start" font-family='"Liberation Sans","Noto Sans CJK SC",sans-serif' transform="rotate(59 427.2 564.6)" textLength="18.5" lengthAdjust="spacingAndGlyphs" stroke="#00ff00" stroke-width="0.35">55±5°</text>
<line x1="392.5" y1="590.5" x2="392.5" y2="600" stroke="#00ff00" stroke-width="1"/>
<line x1="394.5" y1="590.5" x2="394.5" y2="600" stroke="#00ff00" stroke-width="1"/>
<line x1="383" y1="596.5" x2="415.5" y2="596.5" stroke="#00ff00" stroke-width="1"/>
<text x="405" y="596" fill="#00ff00" font-size="6.5" text-anchor="start" font-family='"Liberation Sans","Noto Sans CJK SC",sans-serif' textLength="10" lengthAdjust="spacingAndGlyphs" stroke="#00ff00" stroke-width="0.35">2±1</text>
<polygon points="506.7,394.2 515,394.2 510.7,401.7" fill="none" stroke="#ffffff" stroke-width="1"/>
<line x1="515" y1="394.2" x2="518.2" y2="388.2" stroke="#ffffff" stroke-width="1"/>
<text x="511.2" y="393.7" fill="#ffffff" font-size="6" text-anchor="middle" font-family='"Liberation Sans","Noto Sans CJK SC",sans-serif' stroke="#ffffff" stroke-width="0.35">25</text>
<text x="483" y="401.7" fill="#ffffff" font-size="8.5" text-anchor="start" font-family='"Liberation Sans","Noto Sans CJK SC",sans-serif' font-weight="300" textLength="20.5" lengthAdjust="spacingAndGlyphs" stroke="#ffffff" stroke-width="0.2">全部:</text>
<clipPath id="c8"><path d="M669.5 418 L674 414.5 L737 414.5 L741.5 418 L741.5 453.5 L735 456.5 L676 456.5 L669.5 453.5Z M698.5 414.5 L712.5 414.5 L712.5 426.5 L730.5 426.5 L730.5 456.5 L680.5 456.5 L680.5 426.5 L698.5 426.5Z" clip-rule="evenodd"/></clipPath>
<path clip-path="url(#c8)" d="M622.2 414.5 L664.2 456.5 M627.5 414.5 L669.5 456.5 M632.8 414.5 L674.8 456.5 M638.1 414.5 L680.1 456.5 M643.4 414.5 L685.4 456.5 M648.7 414.5 L690.7 456.5 M654 414.5 L696 456.5 M659.3 414.5 L701.3 456.5 M664.6 414.5 L706.6 456.5 M669.9 414.5 L711.9 456.5 M675.2 414.5 L717.2 456.5 M680.5 414.5 L722.5 456.5 M685.8 414.5 L727.8 456.5 M691.1 414.5 L733.1 456.5 M696.4 414.5 L738.4 456.5 M701.7 414.5 L743.7 456.5 M707 414.5 L749 456.5 M712.3 414.5 L754.3 456.5 M717.6 414.5 L759.6 456.5 M722.9 414.5 L764.9 456.5 M728.2 414.5 L770.2 456.5 M733.5 414.5 L775.5 456.5 M738.8 414.5 L780.8 456.5 M744.1 414.5 L786.1 456.5 M749.4 414.5 L791.4 456.5 M754.7 414.5 L796.7 456.5 M760 414.5 L802 456.5 M765.3 414.5 L807.3 456.5 M770.6 414.5 L812.6 456.5 M775.9 414.5 L817.9 456.5 M781.2 414.5 L823.2 456.5 M786.5 414.5 L828.5 456.5" fill="none" stroke="#00ffff" stroke-width="0.8"/>
<clipPath id="c9"><path d="M687 426.5 L698.5 426.5 L698.5 454 L690.5 454 L690.5 432.5 L687 432.5Z" clip-rule="evenodd"/></clipPath>
<path clip-path="url(#c9)" d="M656.3 454 L683.8 426.5 M659.5 454 L687 426.5 M662.7 454 L690.2 426.5 M665.9 454 L693.4 426.5 M669.1 454 L696.6 426.5 M672.3 454 L699.8 426.5 M675.5 454 L703 426.5 M678.7 454 L706.2 426.5 M681.9 454 L709.4 426.5 M685.1 454 L712.6 426.5 M688.3 454 L715.8 426.5 M691.5 454 L719 426.5 M694.7 454 L722.2 426.5 M697.9 454 L725.4 426.5 M701.1 454 L728.6 426.5 M704.3 454 L731.8 426.5 M707.5 454 L735 426.5 M710.7 454 L738.2 426.5 M713.9 454 L741.4 426.5 M717.1 454 L744.6 426.5 M720.3 454 L747.8 426.5 M723.5 454 L751 426.5 M726.7 454 L754.2 426.5" fill="none" stroke="#00ffff" stroke-width="0.8"/>
<clipPath id="c10"><path d="M712.5 426.5 L724 426.5 L724 432.5 L720.5 432.5 L720.5 454 L712.5 454Z" clip-rule="evenodd"/></clipPath>
<path clip-path="url(#c10)" d="M681.8 454 L709.3 426.5 M685 454 L712.5 426.5 M688.2 454 L715.7 426.5 M691.4 454 L718.9 426.5 M694.6 454 L722.1 426.5 M697.8 454 L725.3 426.5 M701 454 L728.5 426.5 M704.2 454 L731.7 426.5 M707.4 454 L734.9 426.5 M710.6 454 L738.1 426.5 M713.8 454 L741.3 426.5 M717 454 L744.5 426.5 M720.2 454 L747.7 426.5 M723.4 454 L750.9 426.5 M726.6 454 L754.1 426.5 M729.8 454 L757.3 426.5 M733 454 L760.5 426.5 M736.2 454 L763.7 426.5 M739.4 454 L766.9 426.5 M742.6 454 L770.1 426.5 M745.8 454 L773.3 426.5 M749 454 L776.5 426.5 M752.2 454 L779.7 426.5" fill="none" stroke="#00ffff" stroke-width="0.8"/>
<clipPath id="c11"><path d="M680.5 437.5 L690.5 437.5 L690.5 480 L698.5 483 L698.5 616.5 L680.5 616.5Z" clip-rule="evenodd"/></clipPath>
<path clip-path="url(#c11)" d="M493 616.5 L672 437.5 M503.5 616.5 L682.5 437.5 M514 616.5 L693 437.5 M524.5 616.5 L703.5 437.5 M535 616.5 L714 437.5 M545.5 616.5 L724.5 437.5 M556 616.5 L735 437.5 M566.5 616.5 L745.5 437.5 M577 616.5 L756 437.5 M587.5 616.5 L766.5 437.5 M598 616.5 L777 437.5 M608.5 616.5 L787.5 437.5 M619 616.5 L798 437.5 M629.5 616.5 L808.5 437.5 M640 616.5 L819 437.5 M650.5 616.5 L829.5 437.5 M661 616.5 L840 437.5 M671.5 616.5 L850.5 437.5 M682 616.5 L861 437.5 M692.5 616.5 L871.5 437.5 M703 616.5 L882 437.5 M713.5 616.5 L892.5 437.5 M724 616.5 L903 437.5 M734.5 616.5 L913.5 437.5 M745 616.5 L924 437.5 M755.5 616.5 L934.5 437.5 M766 616.5 L945 437.5 M776.5 616.5 L955.5 437.5 M787 616.5 L966 437.5 M797.5 616.5 L976.5 437.5 M808 616.5 L987 437.5 M818.5 616.5 L997.5 437.5 M829 616.5 L1008 437.5 M839.5 616.5 L1018.5 437.5 M850 616.5 L1029 437.5 M860.5 616.5 L1039.5 437.5 M871 616.5 L1050 437.5 M881.5 616.5 L1060.5 437.5" fill="none" stroke="#00ffff" stroke-width="0.8"/>
<clipPath id="c12"><path d="M720.5 437.5 L730.5 437.5 L730.5 616.5 L712.5 616.5 L712.5 483 L720.5 480Z" clip-rule="evenodd"/></clipPath>
<path clip-path="url(#c12)" d="M528 616.5 L707 437.5 M538.5 616.5 L717.5 437.5 M549 616.5 L728 437.5 M559.5 616.5 L738.5 437.5 M570 616.5 L749 437.5 M580.5 616.5 L759.5 437.5 M591 616.5 L770 437.5 M601.5 616.5 L780.5 437.5 M612 616.5 L791 437.5 M622.5 616.5 L801.5 437.5 M633 616.5 L812 437.5 M643.5 616.5 L822.5 437.5 M654 616.5 L833 437.5 M664.5 616.5 L843.5 437.5 M675 616.5 L854 437.5 M685.5 616.5 L864.5 437.5 M696 616.5 L875 437.5 M706.5 616.5 L885.5 437.5 M717 616.5 L896 437.5 M727.5 616.5 L906.5 437.5 M738 616.5 L917 437.5 M748.5 616.5 L927.5 437.5 M759 616.5 L938 437.5 M769.5 616.5 L948.5 437.5 M780 616.5 L959 437.5 M790.5 616.5 L969.5 437.5 M801 616.5 L980 437.5 M811.5 616.5 L990.5 437.5 M822 616.5 L1001 437.5 M832.5 616.5 L1011.5 437.5 M843 616.5 L1022 437.5 M853.5 616.5 L1032.5 437.5 M864 616.5 L1043 437.5 M874.5 616.5 L1053.5 437.5 M885 616.5 L1064 437.5 M895.5 616.5 L1074.5 437.5 M906 616.5 L1085 437.5 M916.5 616.5 L1095.5 437.5" fill="none" stroke="#00ffff" stroke-width="0.8"/>
<clipPath id="c13"><path d="M690.5 454 L698.5 454 L698.5 483 L690.5 480Z" clip-rule="evenodd"/></clipPath>
<path clip-path="url(#c13)" d="M658.5 483 L687.5 454 M661.5 483 L690.5 454 M664.5 483 L693.5 454 M667.5 483 L696.5 454 M670.5 483 L699.5 454 M673.5 483 L702.5 454 M676.5 483 L705.5 454 M679.5 483 L708.5 454 M682.5 483 L711.5 454 M685.5 483 L714.5 454 M688.5 483 L717.5 454 M691.5 483 L720.5 454 M694.5 483 L723.5 454 M697.5 483 L726.5 454 M700.5 483 L729.5 454 M703.5 483 L732.5 454 M706.5 483 L735.5 454 M709.5 483 L738.5 454 M712.5 483 L741.5 454 M715.5 483 L744.5 454 M718.5 483 L747.5 454 M721.5 483 L750.5 454 M724.5 483 L753.5 454 M727.5 483 L756.5 454" fill="none" stroke="#ffff00" stroke-width="0.9"/>
<clipPath id="c14"><path d="M690.5 454 L698.5 454 L698.5 483 L690.5 480Z" clip-rule="evenodd"/></clipPath>
<path clip-path="url(#c14)" d="M658.5 454 L687.5 483 M661.5 454 L690.5 483 M664.5 454 L693.5 483 M667.5 454 L696.5 483 M670.5 454 L699.5 483 M673.5 454 L702.5 483 M676.5 454 L705.5 483 M679.5 454 L708.5 483 M682.5 454 L711.5 483 M685.5 454 L714.5 483 M688.5 454 L717.5 483 M691.5 454 L720.5 483 M694.5 454 L723.5 483 M697.5 454 L726.5 483 M700.5 454 L729.5 483 M703.5 454 L732.5 483 M706.5 454 L735.5 483 M709.5 454 L738.5 483 M712.5 454 L741.5 483 M715.5 454 L744.5 483 M718.5 454 L747.5 483 M721.5 454 L750.5 483 M724.5 454 L753.5 483 M727.5 454 L756.5 483" fill="none" stroke="#ffff00" stroke-width="0.9"/>
<clipPath id="c15"><path d="M712.5 454 L720.5 454 L720.5 480 L712.5 483Z" clip-rule="evenodd"/></clipPath>
<path clip-path="url(#c15)" d="M680.5 483 L709.5 454 M683.5 483 L712.5 454 M686.5 483 L715.5 454 M689.5 483 L718.5 454 M692.5 483 L721.5 454 M695.5 483 L724.5 454 M698.5 483 L727.5 454 M701.5 483 L730.5 454 M704.5 483 L733.5 454 M707.5 483 L736.5 454 M710.5 483 L739.5 454 M713.5 483 L742.5 454 M716.5 483 L745.5 454 M719.5 483 L748.5 454 M722.5 483 L751.5 454 M725.5 483 L754.5 454 M728.5 483 L757.5 454 M731.5 483 L760.5 454 M734.5 483 L763.5 454 M737.5 483 L766.5 454 M740.5 483 L769.5 454 M743.5 483 L772.5 454 M746.5 483 L775.5 454 M749.5 483 L778.5 454" fill="none" stroke="#ffff00" stroke-width="0.9"/>
<clipPath id="c16"><path d="M712.5 454 L720.5 454 L720.5 480 L712.5 483Z" clip-rule="evenodd"/></clipPath>
<path clip-path="url(#c16)" d="M680.5 454 L709.5 483 M683.5 454 L712.5 483 M686.5 454 L715.5 483 M689.5 454 L718.5 483 M692.5 454 L721.5 483 M695.5 454 L724.5 483 M698.5 454 L727.5 483 M701.5 454 L730.5 483 M704.5 454 L733.5 483 M707.5 454 L736.5 483 M710.5 454 L739.5 483 M713.5 454 L742.5 483 M716.5 454 L745.5 483 M719.5 454 L748.5 483 M722.5 454 L751.5 483 M725.5 454 L754.5 483 M728.5 454 L757.5 483 M731.5 454 L760.5 483 M734.5 454 L763.5 483 M737.5 454 L766.5 483 M740.5 454 L769.5 483 M743.5 454 L772.5 483 M746.5 454 L775.5 483 M749.5 454 L778.5 483" fill="none" stroke="#ffff00" stroke-width="0.9"/>
<polyline points="680.5,456.5 676,456.5 669.5,453.5 669.5,418 674,414.5 737,414.5 741.5,418 741.5,453.5 735,456.5 730.5,456.5" fill="none" stroke="#0000ff" stroke-width="1"/>
<polyline points="680.5,456.5 680.5,426.5 730.5,426.5 730.5,456.5" fill="none" stroke="#0000ff" stroke-width="1"/>
<line x1="698.5" y1="414.5" x2="698.5" y2="616.5" stroke="#0000ff" stroke-width="1"/>
<line x1="712.5" y1="414.5" x2="712.5" y2="616.5" stroke="#0000ff" stroke-width="1"/>
<polyline points="687,426.5 687,432.5 690.5,432.5 690.5,480 698.5,483" fill="none" stroke="#0000ff" stroke-width="1"/>
<polyline points="724,426.5 724,432.5 720.5,432.5 720.5,480 712.5,483" fill="none" stroke="#0000ff" stroke-width="1"/>
<line x1="690.5" y1="454" x2="698.5" y2="454" stroke="#0000ff" stroke-width="1"/>
<line x1="712.5" y1="454" x2="720.5" y2="454" stroke="#0000ff" stroke-width="1"/>
<polyline points="680.5,437.5 680.5,616.5 730.5,616.5 730.5,437.5" fill="none" stroke="#0000ff" stroke-width="1"/>
<line x1="680.5" y1="437.5" x2="690.5" y2="437.5" stroke="#0000ff" stroke-width="1"/>
<line x1="720.5" y1="437.5" x2="730.5" y2="437.5" stroke="#0000ff" stroke-width="1"/>
<line x1="684.5" y1="432.5" x2="684.5" y2="474" stroke="#0000ff" stroke-width="1"/>
<line x1="726.5" y1="432.5" x2="726.5" y2="474" stroke="#0000ff" stroke-width="1"/>
<line x1="684.5" y1="432.5" x2="687" y2="432.5" stroke="#0000ff" stroke-width="1"/>
<line x1="724" y1="432.5" x2="726.5" y2="432.5" stroke="#0000ff" stroke-width="1"/>
<polyline points="681.5,433 681.5,441 683.5,443.5 683.5,473 680.5,477" fill="none" stroke="#ffffff" stroke-width="1"/>
<polyline points="729.5,433 729.5,441 727.5,443.5 727.5,473 730.5,477" fill="none" stroke="#ffffff" stroke-width="1"/>
<line x1="705.5" y1="395" x2="705.5" y2="637" stroke="#ff0000" stroke-width="1" stroke-dasharray="13 1 3 1"/>
<line x1="643" y1="437.5" x2="680.5" y2="437.5" stroke="#00ff00" stroke-width="1"/>
<line x1="643" y1="616.5" x2="680.5" y2="616.5" stroke="#00ff00" stroke-width="1"/>
<line x1="650.5" y1="437.5" x2="650.5" y2="616.5" stroke="#00ff00" stroke-width="1"/>
<rect x="649.5" y="440" width="3" height="4" fill="#00ff00" stroke="none" stroke-width="1"/>
<rect x="649.5" y="610" width="3" height="4" fill="#00ff00" stroke="none" stroke-width="1"/>
<text x="649" y="531" fill="#00ff00" font-size="6.5" text-anchor="start" font-family='"Liberation Sans","Noto Sans CJK SC",sans-serif' transform="rotate(-90 649 531)" textLength="11" lengthAdjust="spacingAndGlyphs" stroke="#00ff00" stroke-width="0.35">150</text>
<line x1="680.5" y1="616.5" x2="680.5" y2="638" stroke="#00ff00" stroke-width="1"/>
<line x1="730.5" y1="616.5" x2="730.5" y2="638" stroke="#00ff00" stroke-width="1"/>
<line x1="680.5" y1="630.5" x2="730.5" y2="630.5" stroke="#00ff00" stroke-width="1"/>
<rect x="682" y="629.5" width="4" height="3" fill="#00ff00" stroke="none" stroke-width="1"/>
<rect x="725" y="629.5" width="4" height="3" fill="#00ff00" stroke="none" stroke-width="1"/>
<text x="705.5" y="630" fill="#00ff00" font-size="6.5" text-anchor="middle" font-family='"Liberation Sans","Noto Sans CJK SC",sans-serif' textLength="13" lengthAdjust="spacingAndGlyphs" stroke="#00ff00" stroke-width="0.35">ϕ42</text>
<line x1="698.5" y1="404.5" x2="698.5" y2="414.5" stroke="#00ff00" stroke-width="1"/>
<line x1="712.5" y1="404.5" x2="712.5" y2="414.5" stroke="#00ff00" stroke-width="1"/>
<line x1="698.5" y1="409.5" x2="712.5" y2="409.5" stroke="#00ff00" stroke-width="1"/>
<text x="705.5" y="409" fill="#00ff00" font-size="6.5" text-anchor="middle" font-family='"Liberation Sans","Noto Sans CJK SC",sans-serif' textLength="11" lengthAdjust="spacingAndGlyphs" stroke="#00ff00" stroke-width="0.35">ϕ11</text>
<line x1="690.5" y1="468.5" x2="720.5" y2="468.5" stroke="#00ff00" stroke-width="1"/>
<text x="705.5" y="468" fill="#00ff00" font-size="6.5" text-anchor="middle" font-family='"Liberation Sans","Noto Sans CJK SC",sans-serif' textLength="11" lengthAdjust="spacingAndGlyphs" stroke="#00ff00" stroke-width="0.35">ϕ15</text>
<polyline points="733,431 757,417.5 786,417.5" fill="none" stroke="#00ff00" stroke-width="1"/>
<circle cx="733" cy="431" r="1" fill="#00ff00" stroke="#00ff00" stroke-width="1"/>
<text x="762" y="416" fill="#ffffff" font-size="9.6" text-anchor="start" font-family='"Liberation Sans","Noto Sans CJK SC",sans-serif' textLength="23" lengthAdjust="spacingAndGlyphs" stroke="#ffffff" stroke-width="0.1">36–1</text>
<polyline points="717,445 756,434.5 786,434.5" fill="none" stroke="#00ff00" stroke-width="1"/>
<circle cx="717" cy="445" r="1" fill="#00ff00" stroke="#00ff00" stroke-width="1"/>
<text x="763" y="432" fill="#ffffff" font-size="9.6" text-anchor="start" font-family='"Liberation Sans","Noto Sans CJK SC",sans-serif' textLength="23" lengthAdjust="spacingAndGlyphs" stroke="#ffffff" stroke-width="0.1">36–2</text>
<polyline points="717,461 755,453.5 786,453.5" fill="none" stroke="#00ff00" stroke-width="1"/>
<circle cx="717" cy="461" r="1" fill="#00ff00" stroke="#00ff00" stroke-width="1"/>
<text x="763" y="450.7" fill="#ffffff" font-size="9.6" text-anchor="start" font-family='"Liberation Sans","Noto Sans CJK SC",sans-serif' textLength="23" lengthAdjust="spacingAndGlyphs" stroke="#ffffff" stroke-width="0.1">36–3</text>
<polyline points="721.5,492 756.5,481.5 786,481.5" fill="none" stroke="#00ff00" stroke-width="1"/>
<circle cx="721.5" cy="492" r="1" fill="#00ff00" stroke="#00ff00" stroke-width="1"/>
<text x="764" y="478" fill="#ffffff" font-size="9.6" text-anchor="start" font-family='"Liberation Sans","Noto Sans CJK SC",sans-serif' textLength="23" lengthAdjust="spacingAndGlyphs" stroke="#ffffff" stroke-width="0.1">36–4</text>
<line x1="804.5" y1="598.5" x2="1020.5" y2="598.5" stroke="#ffffff" stroke-width="1"/>
<line x1="804.5" y1="606.5" x2="1020.5" y2="606.5" stroke="#ffffff" stroke-width="1"/>
<line x1="804.5" y1="615.5" x2="1020.5" y2="615.5" stroke="#ffffff" stroke-width="1"/>
<line x1="804.5" y1="623.5" x2="1020.5" y2="623.5" stroke="#ffffff" stroke-width="1"/>
<line x1="804.5" y1="632.5" x2="1020.5" y2="632.5" stroke="#ffffff" stroke-width="1"/>
<line x1="804.5" y1="598.5" x2="804.5" y2="723" stroke="#0000ff" stroke-width="1"/>
<line x1="822.5" y1="598.5" x2="822.5" y2="648.5" stroke="#ffffff" stroke-width="1"/>
<line x1="858.5" y1="598.5" x2="858.5" y2="648.5" stroke="#ffffff" stroke-width="1"/>
<line x1="924.5" y1="598.5" x2="924.5" y2="648.5" stroke="#ffffff" stroke-width="1"/>
<line x1="936.5" y1="598.5" x2="936.5" y2="648.5" stroke="#ffffff" stroke-width="1"/>
<line x1="972.5" y1="598.5" x2="972.5" y2="648.5" stroke="#ffffff" stroke-width="1"/>
<line x1="985" y1="598.5" x2="985" y2="640.5" stroke="#ffffff" stroke-width="1"/>
<line x1="996.5" y1="598.5" x2="996.5" y2="648.5" stroke="#ffffff" stroke-width="1"/>
<line x1="804.5" y1="648.5" x2="1020.5" y2="648.5" stroke="#0000ff" stroke-width="1"/>
<line x1="804.5" y1="656.5" x2="1020.5" y2="656.5" stroke="#ffffff" stroke-width="1"/>
<line x1="804.5" y1="665.5" x2="1020.5" y2="665.5" stroke="#0000ff" stroke-width="1"/>
<line x1="972.5" y1="640.5" x2="996.5" y2="640.5" stroke="#ffffff" stroke-width="1"/>
<line x1="822.5" y1="648.5" x2="822.5" y2="665.5" stroke="#ffffff" stroke-width="1"/>
<line x1="888.5" y1="648.5" x2="888.5" y2="665.5" stroke="#ffffff" stroke-width="1"/>
<line x1="924.5" y1="648.5" x2="924.5" y2="665.5" stroke="#ffffff" stroke-width="1"/>
<line x1="942.5" y1="648.5" x2="942.5" y2="665.5" stroke="#ffffff" stroke-width="1"/>
<line x1="960.5" y1="648.5" x2="960.5" y2="665.5" stroke="#ffffff" stroke-width="1"/>
<line x1="990.5" y1="648.5" x2="990.5" y2="665.5" stroke="#ffffff" stroke-width="1"/>
<text x="806" y="605.2" fill="#00ffff" font-size="6.8" text-anchor="start" font-family='"Liberation Sans","Noto Sans CJK SC",sans-serif' textLength="17" lengthAdjust="spacingAndGlyphs" stroke="#00ffff" stroke-width="0.15">36–4</text>
<text x="891.5" y="605.2" fill="#00ffff" font-size="6" text-anchor="middle" font-family='"Liberation Sans","Noto Sans CJK SC",sans-serif' font-weight="300" stroke="#00ffff" stroke-width="0.15">丝堵堵体</text>
<text x="930.5" y="605.2" fill="#00ffff" font-size="6.5" text-anchor="middle" font-family='"Liberation Sans","Noto Sans CJK SC",sans-serif' stroke="#00ffff" stroke-width="0.35">1</text>
<text x="954.5" y="605.2" fill="#00ffff" font-size="6" text-anchor="middle" font-family='"Liberation Sans","Noto Sans CJK SC",sans-serif' stroke="#00ffff" stroke-width="0.15">20</text>
<text x="990.5" y="605.2" fill="#00ffff" font-size="6.5" text-anchor="middle" font-family='"Liberation Sans","Noto Sans CJK SC",sans-serif' textLength="9" lengthAdjust="spacingAndGlyphs" stroke="#00ffff" stroke-width="0.35">0.6</text>
<text x="806" y="614" fill="#00ffff" font-size="6.8" text-anchor="start" font-family='"Liberation Sans","Noto Sans CJK SC",sans-serif' textLength="17" lengthAdjust="spacingAndGlyphs" stroke="#00ffff" stroke-width="0.15">36–3</text>
<text x="891.5" y="614" fill="#00ffff" font-size="6" text-anchor="middle" font-family='"Liberation Sans","Noto Sans CJK SC",sans-serif' font-weight="300" stroke="#00ffff" stroke-width="0.15">丝堵</text>
<text x="954.5" y="614" fill="#00ffff" font-size="6" text-anchor="middle" font-family='"Liberation Sans","Noto Sans CJK SC",sans-serif' font-weight="300" stroke="#00ffff" stroke-width="0.15">石棉绳</text>
<text x="806" y="622.3" fill="#00ffff" font-size="6.8" text-anchor="start" font-family='"Liberation Sans","Noto Sans CJK SC",sans-serif' textLength="17" lengthAdjust="spacingAndGlyphs" stroke="#00ffff" stroke-width="0.15">36–2</text>
<text x="891.5" y="622.3" fill="#00ffff" font-size="6" text-anchor="middle" font-family='"Liberation Sans","Noto Sans CJK SC",sans-serif' font-weight="300" stroke="#00ffff" stroke-width="0.15">压盖</text>
<text x="930.5" y="622.3" fill="#00ffff" font-size="6.5" text-anchor="middle" font-family='"Liberation Sans","Noto Sans CJK SC",sans-serif' stroke="#00ffff" stroke-width="0.35">1</text>
<text x="954.5" y="622.3" fill="#00ffff" font-size="6" text-anchor="middle" font-family='"Liberation Sans","Noto Sans CJK SC",sans-serif' stroke="#00ffff" stroke-width="0.15">20</text>
<text x="990.5" y="622.3" fill="#00ffff" font-size="6.5" text-anchor="middle" font-family='"Liberation Sans","Noto Sans CJK SC",sans-serif' textLength="9" lengthAdjust="spacingAndGlyphs" stroke="#00ffff" stroke-width="0.35">0.2</text>
<text x="806" y="631" fill="#00ffff" font-size="6.8" text-anchor="start" font-family='"Liberation Sans","Noto Sans CJK SC",sans-serif' textLength="17" lengthAdjust="spacingAndGlyphs" stroke="#00ffff" stroke-width="0.15">36–1</text>
<text x="891.5" y="631" fill="#00ffff" font-size="6" text-anchor="middle" font-family='"Liberation Sans","Noto Sans CJK SC",sans-serif' font-weight="300" stroke="#00ffff" stroke-width="0.15">螺帽</text>
<text x="930.5" y="631" fill="#00ffff" font-size="6.5" text-anchor="middle" font-family='"Liberation Sans","Noto Sans CJK SC",sans-serif' stroke="#00ffff" stroke-width="0.35">1</text>
<text x="954.5" y="631" fill="#00ffff" font-size="6" text-anchor="middle" font-family='"Liberation Sans","Noto Sans CJK SC",sans-serif' font-weight="300" stroke="#00ffff" stroke-width="0.15">黄铜</text>
<text x="990.5" y="631" fill="#00ffff" font-size="6.5" text-anchor="middle" font-family='"Liberation Sans","Noto Sans CJK SC",sans-serif' textLength="9" lengthAdjust="spacingAndGlyphs" stroke="#00ffff" stroke-width="0.35">0.2</text>
<text x="813.5" y="644" fill="#00ffff" font-size="6" text-anchor="middle" font-family='"Liberation Sans","Noto Sans CJK SC",sans-serif' font-weight="300" stroke="#00ffff" stroke-width="0.15">件号</text>
<text x="840.5" y="644" fill="#00ffff" font-size="5.6" text-anchor="middle" font-family='"Liberation Sans","Noto Sans CJK SC",sans-serif' font-weight="300" textLength="33" lengthAdjust="spacingAndGlyphs" stroke="#00ffff" stroke-width="0.15">图号或标准号</text>
<text x="891.5" y="643" fill="#00ffff" font-size="6" text-anchor="middle" font-family='"Liberation Sans","Noto Sans CJK SC",sans-serif' font-weight="300" stroke="#00ffff" stroke-width="0.15">名　　　称</text>
<text x="930.5" y="644" fill="#00ffff" font-size="5.6" text-anchor="middle" font-family='"Liberation Sans","Noto Sans CJK SC",sans-serif' font-weight="300" stroke="#00ffff" stroke-width="0.15">数量</text>
<text x="954.5" y="643" fill="#00ffff" font-size="6" text-anchor="middle" font-family='"Liberation Sans","Noto Sans CJK SC",sans-serif' font-weight="300" stroke="#00ffff" stroke-width="0.15">材　　料</text>
<text x="1008" y="643" fill="#00ffff" font-size="6" text-anchor="middle" font-family='"Liberation Sans","Noto Sans CJK SC",sans-serif' font-weight="300" stroke="#00ffff" stroke-width="0.15">备注</text>
<text x="979" y="639" fill="#00ffff" font-size="5.5" text-anchor="middle" font-family='"Liberation Sans","Noto Sans CJK SC",sans-serif' font-weight="300" stroke="#00ffff" stroke-width="0.1">单</text>
<text x="991" y="639" fill="#00ffff" font-size="5.5" text-anchor="middle" font-family='"Liberation Sans","Noto Sans CJK SC",sans-serif' font-weight="300" stroke="#00ffff" stroke-width="0.1">重</text>
<rect x="974" y="643" width="15" height="4" fill="#00ffff" stroke="none" stroke-width="1"/>
<rect x="989" y="645" width="3" height="2" fill="#0000ff" stroke="none" stroke-width="1"/>
<rect x="991" y="644" width="2" height="3" fill="#00ffff" stroke="none" stroke-width="1"/>
<text x="813.5" y="655" fill="#00ffff" font-size="6.5" text-anchor="middle" font-family='"Liberation Sans","Noto Sans CJK SC",sans-serif' stroke="#00ffff" stroke-width="0.35">36</text>
<text x="855" y="655" fill="#00ffff" font-size="6" text-anchor="middle" font-family='"Liberation Sans","Noto Sans CJK SC",sans-serif' font-weight="300" stroke="#00ffff" stroke-width="0.15">丝堵堵</text>
<text x="906.5" y="655" fill="#00ffff" font-size="6.5" text-anchor="middle" font-family='"Liberation Sans","Noto Sans CJK SC",sans-serif' stroke="#00ffff" stroke-width="0.35">20R</text>
<text x="933.5" y="655" fill="#00ffff" font-size="6.5" text-anchor="middle" font-family='"Liberation Sans","Noto Sans CJK SC",sans-serif' stroke="#00ffff" stroke-width="0.35">1</text>
<text x="951.5" y="655" fill="#00ffff" font-size="6.5" text-anchor="middle" font-family='"Liberation Sans","Noto Sans CJK SC",sans-serif' stroke="#00ffff" stroke-width="0.35">1:1</text>
<text x="813.5" y="664" fill="#00ffff" font-size="6" text-anchor="middle" font-family='"Liberation Sans","Noto Sans CJK SC",sans-serif' font-weight="300" stroke="#00ffff" stroke-width="0.15">件号</text>
<text x="855" y="664" fill="#00ffff" font-size="6" text-anchor="middle" font-family='"Liberation Sans","Noto Sans CJK SC",sans-serif' font-weight="300" stroke="#00ffff" stroke-width="0.15">名　　　称</text>
<text x="906.5" y="664" fill="#00ffff" font-size="6" text-anchor="middle" font-family='"Liberation Sans","Noto Sans CJK SC",sans-serif' font-weight="300" stroke="#00ffff" stroke-width="0.15">材　料</text>
<text x="951.5" y="664" fill="#00ffff" font-size="6" text-anchor="middle" font-family='"Liberation Sans","Noto Sans CJK SC",sans-serif' font-weight="300" stroke="#00ffff" stroke-width="0.15">比例</text>
<text x="975.5" y="664" fill="#00ffff" font-size="6" text-anchor="middle" font-family='"Liberation Sans","Noto Sans CJK SC",sans-serif' font-weight="300" stroke="#00ffff" stroke-width="0.15">所在图号</text>
<text x="1005.5" y="664" fill="#00ffff" font-size="6" text-anchor="middle" font-family='"Liberation Sans","Noto Sans CJK SC",sans-serif' font-weight="300" stroke="#00ffff" stroke-width="0.15">装配图号</text>
<rect x="925" y="660" width="13" height="5" fill="#00ffff" stroke="none" stroke-width="1"/>
<rect x="937.5" y="662.5" width="3" height="2" fill="#0000ff" stroke="none" stroke-width="1"/>
<rect x="939.5" y="661.5" width="2" height="3" fill="#00ffff" stroke="none" stroke-width="1"/>
<line x1="900.5" y1="665.5" x2="900.5" y2="723" stroke="#ffffff" stroke-width="1"/>
<line x1="804.5" y1="675.5" x2="900.5" y2="675.5" stroke="#ffffff" stroke-width="1"/>
<line x1="804.5" y1="684.5" x2="900.5" y2="684.5" stroke="#ffffff" stroke-width="1"/>
<line x1="804.5" y1="694.5" x2="900.5" y2="694.5" stroke="#ffffff" stroke-width="1"/>
<line x1="804.5" y1="704.5" x2="900.5" y2="704.5" stroke="#ffffff" stroke-width="1"/>
<line x1="804.5" y1="713.5" x2="900.5" y2="713.5" stroke="#ffffff" stroke-width="1"/>
<line x1="828.5" y1="684.5" x2="828.5" y2="723" stroke="#ffffff" stroke-width="1"/>
<line x1="852.5" y1="684.5" x2="852.5" y2="723" stroke="#ffffff" stroke-width="1"/>
<line x1="876.5" y1="684.5" x2="876.5" y2="723" stroke="#ffffff" stroke-width="1"/>
<line x1="900.5" y1="694.5" x2="1020.5" y2="694.5" stroke="#ffffff" stroke-width="1"/>
<line x1="972.5" y1="694.5" x2="972.5" y2="723" stroke="#ffffff" stroke-width="1"/>
<line x1="972.5" y1="713.5" x2="1020.5" y2="713.5" stroke="#ffffff" stroke-width="1"/>
<line x1="996.5" y1="713.5" x2="996.5" y2="723" stroke="#ffffff" stroke-width="1"/>
<text x="853" y="683" fill="#00ffff" font-size="7" text-anchor="start" font-family='"Liberation Sans","Noto Sans CJK SC",sans-serif' textLength="15" lengthAdjust="spacingAndGlyphs" stroke="#00ffff" stroke-width="0.35">2009</text>
<text x="868" y="683" fill="#00ffff" font-size="5.5" text-anchor="start" font-family='"Liberation Sans","Noto Sans CJK SC",sans-serif' font-weight="300" stroke="#00ffff" stroke-width="0.1">年</text>
<text x="877" y="683" fill="#00ffff" font-size="7" text-anchor="start" font-family='"Liberation Sans","Noto Sans CJK SC",sans-serif' stroke="#00ffff" stroke-width="0.35">5</text>
<text x="883" y="683" fill="#00ffff" font-size="5.5" text-anchor="start" font-family='"Liberation Sans","Noto Sans CJK SC",sans-serif' font-weight="300" stroke="#00ffff" stroke-width="0.1">月</text>
<text x="888" y="683" fill="#00ffff" font-size="7" text-anchor="start" font-family='"Liberation Sans","Noto Sans CJK SC",sans-serif' textLength="8" lengthAdjust="spacingAndGlyphs" stroke="#00ffff" stroke-width="0.35">16</text>
<text x="896.5" y="683" fill="#00ffff" font-size="5" text-anchor="start" font-family='"Liberation Sans","Noto Sans CJK SC",sans-serif' font-weight="300" stroke="#00ffff" stroke-width="0.1">日</text>
<text x="807.5" y="693" fill="#e8e8e8" font-size="5.8" text-anchor="start" font-family='"Liberation Sans","Noto Sans CJK SC",sans-serif' font-weight="300" stroke="#e8e8e8" stroke-width="0.12">审</text>
<text x="817.5" y="693" fill="#e8e8e8" font-size="5.8" text-anchor="start" font-family='"Liberation Sans","Noto Sans CJK SC",sans-serif' font-weight="300" stroke="#e8e8e8" stroke-width="0.12">定</text>
<text x="853" y="693" fill="#e8e8e8" font-size="5.8" text-anchor="start" font-family='"Liberation Sans","Noto Sans CJK SC",sans-serif' font-weight="300" textLength="23" lengthAdjust="spacingAndGlyphs" stroke="#e8e8e8" stroke-width="0.12">工程编号</text>
<text x="807.5" y="703" fill="#e8e8e8" font-size="5.8" text-anchor="start" font-family='"Liberation Sans","Noto Sans CJK SC",sans-serif' font-weight="300" stroke="#e8e8e8" stroke-width="0.12">审</text>
<text x="817.5" y="703" fill="#e8e8e8" font-size="5.8" text-anchor="start" font-family='"Liberation Sans","Noto Sans CJK SC",sans-serif' font-weight="300" stroke="#e8e8e8" stroke-width="0.12">核</text>
<text x="853" y="703" fill="#e8e8e8" font-size="5.8" text-anchor="start" font-family='"Liberation Sans","Noto Sans CJK SC",sans-serif' font-weight="300" textLength="23" lengthAdjust="spacingAndGlyphs" stroke="#e8e8e8" stroke-width="0.12">设计阶段</text>
<text x="807.5" y="712" fill="#e8e8e8" font-size="5.8" text-anchor="start" font-family='"Liberation Sans","Noto Sans CJK SC",sans-serif' font-weight="300" stroke="#e8e8e8" stroke-width="0.12">审</text>
<text x="817.5" y="712" fill="#e8e8e8" font-size="5.8" text-anchor="start" font-family='"Liberation Sans","Noto Sans CJK SC",sans-serif' font-weight="300" stroke="#e8e8e8" stroke-width="0.12">核</text>
<text x="853" y="712" fill="#e8e8e8" font-size="5.8" text-anchor="start" font-family='"Liberation Sans","Noto Sans CJK SC",sans-serif' font-weight="300" textLength="17" lengthAdjust="spacingAndGlyphs" stroke="#e8e8e8" stroke-width="0.12">比例尺</text>
<text x="807.5" y="722" fill="#e8e8e8" font-size="5.8" text-anchor="start" font-family='"Liberation Sans","Noto Sans CJK SC",sans-serif' font-weight="300" stroke="#e8e8e8" stroke-width="0.12">设</text>
<text x="817.5" y="722" fill="#e8e8e8" font-size="5.8" text-anchor="start" font-family='"Liberation Sans","Noto Sans CJK SC",sans-serif' font-weight="300" stroke="#e8e8e8" stroke-width="0.12">计</text>
<text x="853" y="722" fill="#e8e8e8" font-size="5.8" text-anchor="start" font-family='"Liberation Sans","Noto Sans CJK SC",sans-serif' font-weight="300" textLength="20" lengthAdjust="spacingAndGlyphs" stroke="#e8e8e8" stroke-width="0.12">制　图</text>
<text x="957" y="685.8" fill="#00ffff" font-size="8.5" text-anchor="middle" font-family='"Liberation Sans","Noto Sans CJK SC",sans-serif' font-weight="300" textLength="76" lengthAdjust="spacingAndGlyphs" stroke="#00ffff" stroke-width="0.2">氧化反应器零部件图</text>
<text x="973" y="722" fill="#e8e8e8" font-size="6" text-anchor="start" font-family='"Liberation Sans","Noto Sans CJK SC",sans-serif' font-weight="300" stroke="#e8e8e8" stroke-width="0.1">共</text>
<text x="982.3" y="722" fill="#e8e8e8" font-size="9" text-anchor="start" font-family='"Liberation Sans","Noto Sans CJK SC",sans-serif' stroke="#e8e8e8" stroke-width="0.1">6</text>
<text x="991" y="722" fill="#e8e8e8" font-size="6" text-anchor="start" font-family='"Liberation Sans","Noto Sans CJK SC",sans-serif' font-weight="300" stroke="#e8e8e8" stroke-width="0.1">张</text>
<text x="997" y="722" fill="#e8e8e8" font-size="5.5" text-anchor="start" font-family='"Liberation Sans","Noto Sans CJK SC",sans-serif' font-weight="300" stroke="#e8e8e8" stroke-width="0.1">第</text>
<text x="1007" y="722" fill="#e8e8e8" font-size="9" text-anchor="start" font-family='"Liberation Sans","Noto Sans CJK SC",sans-serif' stroke="#e8e8e8" stroke-width="0.1">6</text>
<text x="1016.5" y="722" fill="#e8e8e8" font-size="6" text-anchor="start" font-family='"Liberation Sans","Noto Sans CJK SC",sans-serif' font-weight="300" stroke="#e8e8e8" stroke-width="0.1">张</text>
</svg>
</body></html>
